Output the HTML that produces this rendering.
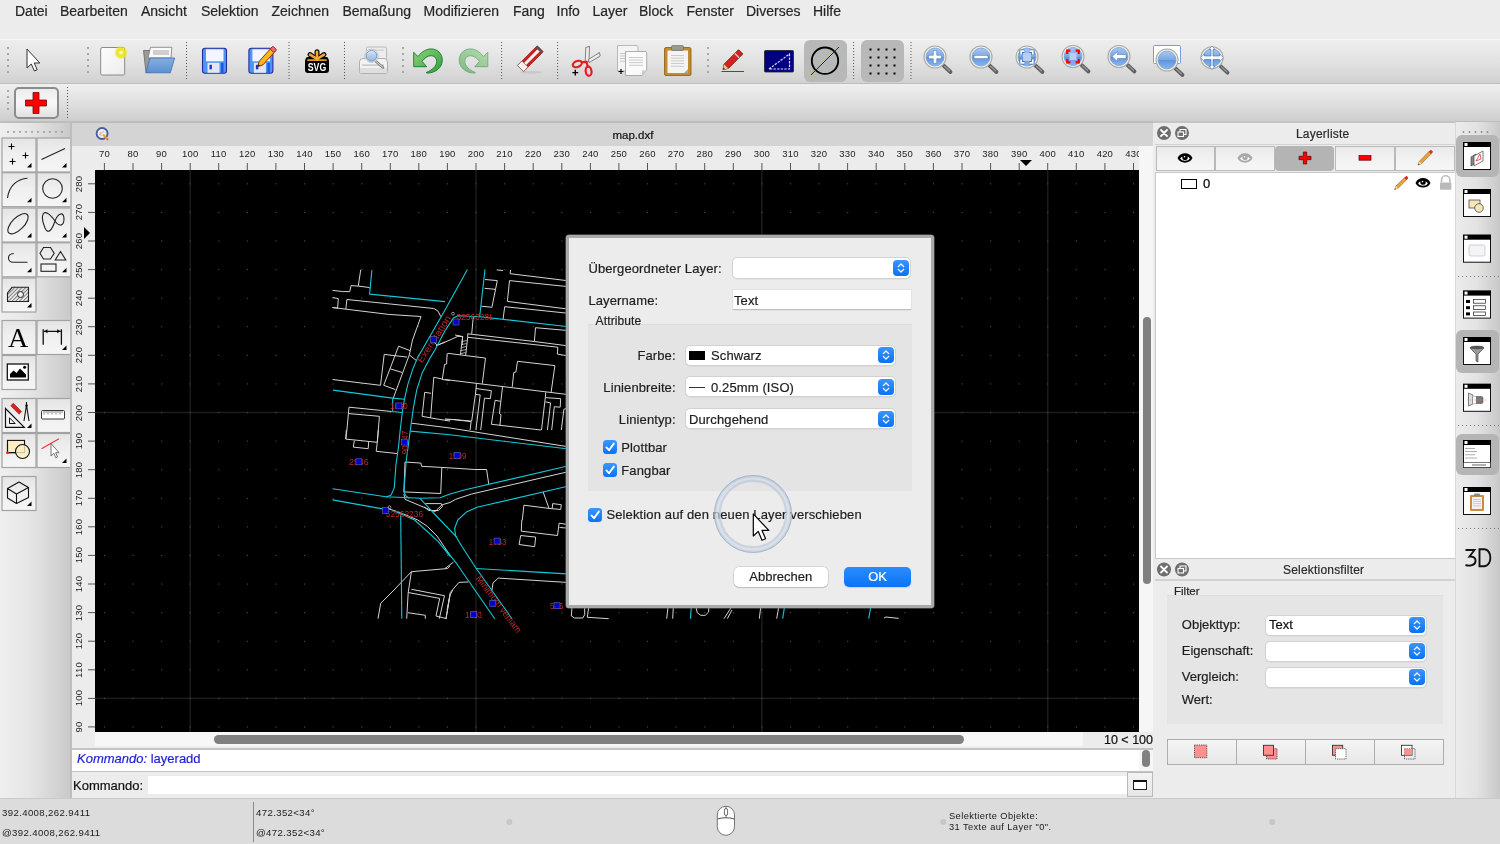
<!DOCTYPE html><html><head><meta charset="utf-8"><style>
*{box-sizing:border-box;margin:0;padding:0}
html,body{width:1500px;height:844px;overflow:hidden;background:#ececec;font-family:"Liberation Sans",sans-serif;color:#000}
body{position:relative}
.a{position:absolute}
.t{position:absolute;white-space:nowrap;line-height:1;-webkit-text-stroke:0.2px currentColor}
.mi{position:absolute;top:3px;font-size:14px;color:#262626;line-height:17px;white-space:nowrap;-webkit-text-stroke:0.2px currentColor}
.tbtn{position:absolute;width:34px;height:34px;border:1px solid #ababab;background:linear-gradient(#f7f7f7,#efefef 50%,#e2e2e2)}
.st{position:absolute;font-size:9.6px;letter-spacing:0.38px;color:#1a1a1a;white-space:nowrap;line-height:1}
.combo{position:absolute;background:#fff;border:1px solid #d2d2d2;border-radius:5px;box-shadow:0 0.5px 0.5px rgba(0,0,0,.08)}
.cbtn{position:absolute;background:linear-gradient(#3a95ff,#0a72f0);border-radius:4px}
.chk{position:absolute;width:14px;height:14px;border-radius:3.5px;background:linear-gradient(#3b97ff,#0b74f2)}
</style></head><body><div style="position:absolute;left:0;top:0;width:1500px;height:844px;will-change:transform">
<div class="mi" style="left:15px">Datei</div>
<div class="mi" style="left:60px">Bearbeiten</div>
<div class="mi" style="left:141px">Ansicht</div>
<div class="mi" style="left:201px">Selektion</div>
<div class="mi" style="left:271.5px">Zeichnen</div>
<div class="mi" style="left:342.5px">Bemaßung</div>
<div class="mi" style="left:423.5px">Modifizieren</div>
<div class="mi" style="left:513px">Fang</div>
<div class="mi" style="left:556.5px">Info</div>
<div class="mi" style="left:592.5px">Layer</div>
<div class="mi" style="left:639px">Block</div>
<div class="mi" style="left:686.5px">Fenster</div>
<div class="mi" style="left:746px">Diverses</div>
<div class="mi" style="left:813px">Hilfe</div>
<div class="a" style="left:0;top:39px;width:1500px;height:45px;background:linear-gradient(#eeeeee,#e2e2e2 50%,#d1d1d1);border-top:1px solid #f7f7f7;border-bottom:1px solid #bdbdbd"></div>
<div class="a" style="left:0;top:84px;width:1500px;height:39px;background:linear-gradient(#efefef,#e0e0e0 50%,#cecece);border-bottom:2px solid #bdbdbd"></div>
<svg class="a" style="left:0px;top:0px;overflow:visible" width="1" height="1" viewBox="0 0 1 1"><rect x="7.1" y="47.1" width="1.8" height="1.8" fill="#9a9a9a"/><rect x="7.1" y="53.1" width="1.8" height="1.8" fill="#9a9a9a"/><rect x="7.1" y="59.1" width="1.8" height="1.8" fill="#9a9a9a"/><rect x="7.1" y="65.1" width="1.8" height="1.8" fill="#9a9a9a"/><rect x="7.1" y="71.1" width="1.8" height="1.8" fill="#9a9a9a"/><rect x="87.1" y="47.1" width="1.8" height="1.8" fill="#9a9a9a"/><rect x="87.1" y="53.1" width="1.8" height="1.8" fill="#9a9a9a"/><rect x="87.1" y="59.1" width="1.8" height="1.8" fill="#9a9a9a"/><rect x="87.1" y="65.1" width="1.8" height="1.8" fill="#9a9a9a"/><rect x="87.1" y="71.1" width="1.8" height="1.8" fill="#9a9a9a"/><rect x="402.1" y="47.1" width="1.8" height="1.8" fill="#9a9a9a"/><rect x="402.1" y="53.1" width="1.8" height="1.8" fill="#9a9a9a"/><rect x="402.1" y="59.1" width="1.8" height="1.8" fill="#9a9a9a"/><rect x="402.1" y="65.1" width="1.8" height="1.8" fill="#9a9a9a"/><rect x="402.1" y="71.1" width="1.8" height="1.8" fill="#9a9a9a"/><rect x="707.1" y="47.1" width="1.8" height="1.8" fill="#9a9a9a"/><rect x="707.1" y="53.1" width="1.8" height="1.8" fill="#9a9a9a"/><rect x="707.1" y="59.1" width="1.8" height="1.8" fill="#9a9a9a"/><rect x="707.1" y="65.1" width="1.8" height="1.8" fill="#9a9a9a"/><rect x="707.1" y="71.1" width="1.8" height="1.8" fill="#9a9a9a"/><rect x="186.0" y="42.0" width="1" height="1" fill="#555"/><rect x="186.0" y="45.0" width="1" height="1" fill="#555"/><rect x="186.0" y="48.0" width="1" height="1" fill="#555"/><rect x="186.0" y="51.0" width="1" height="1" fill="#555"/><rect x="186.0" y="54.0" width="1" height="1" fill="#555"/><rect x="186.0" y="57.0" width="1" height="1" fill="#555"/><rect x="186.0" y="60.0" width="1" height="1" fill="#555"/><rect x="186.0" y="63.0" width="1" height="1" fill="#555"/><rect x="186.0" y="66.0" width="1" height="1" fill="#555"/><rect x="186.0" y="69.0" width="1" height="1" fill="#555"/><rect x="186.0" y="72.0" width="1" height="1" fill="#555"/><rect x="186.0" y="75.0" width="1" height="1" fill="#555"/><rect x="186.0" y="78.0" width="1" height="1" fill="#555"/><rect x="288.5" y="42.0" width="1" height="1" fill="#555"/><rect x="288.5" y="45.0" width="1" height="1" fill="#555"/><rect x="288.5" y="48.0" width="1" height="1" fill="#555"/><rect x="288.5" y="51.0" width="1" height="1" fill="#555"/><rect x="288.5" y="54.0" width="1" height="1" fill="#555"/><rect x="288.5" y="57.0" width="1" height="1" fill="#555"/><rect x="288.5" y="60.0" width="1" height="1" fill="#555"/><rect x="288.5" y="63.0" width="1" height="1" fill="#555"/><rect x="288.5" y="66.0" width="1" height="1" fill="#555"/><rect x="288.5" y="69.0" width="1" height="1" fill="#555"/><rect x="288.5" y="72.0" width="1" height="1" fill="#555"/><rect x="288.5" y="75.0" width="1" height="1" fill="#555"/><rect x="288.5" y="78.0" width="1" height="1" fill="#555"/><rect x="344.0" y="42.0" width="1" height="1" fill="#555"/><rect x="344.0" y="45.0" width="1" height="1" fill="#555"/><rect x="344.0" y="48.0" width="1" height="1" fill="#555"/><rect x="344.0" y="51.0" width="1" height="1" fill="#555"/><rect x="344.0" y="54.0" width="1" height="1" fill="#555"/><rect x="344.0" y="57.0" width="1" height="1" fill="#555"/><rect x="344.0" y="60.0" width="1" height="1" fill="#555"/><rect x="344.0" y="63.0" width="1" height="1" fill="#555"/><rect x="344.0" y="66.0" width="1" height="1" fill="#555"/><rect x="344.0" y="69.0" width="1" height="1" fill="#555"/><rect x="344.0" y="72.0" width="1" height="1" fill="#555"/><rect x="344.0" y="75.0" width="1" height="1" fill="#555"/><rect x="344.0" y="78.0" width="1" height="1" fill="#555"/><rect x="501.1" y="42.0" width="1" height="1" fill="#555"/><rect x="501.1" y="45.0" width="1" height="1" fill="#555"/><rect x="501.1" y="48.0" width="1" height="1" fill="#555"/><rect x="501.1" y="51.0" width="1" height="1" fill="#555"/><rect x="501.1" y="54.0" width="1" height="1" fill="#555"/><rect x="501.1" y="57.0" width="1" height="1" fill="#555"/><rect x="501.1" y="60.0" width="1" height="1" fill="#555"/><rect x="501.1" y="63.0" width="1" height="1" fill="#555"/><rect x="501.1" y="66.0" width="1" height="1" fill="#555"/><rect x="501.1" y="69.0" width="1" height="1" fill="#555"/><rect x="501.1" y="72.0" width="1" height="1" fill="#555"/><rect x="501.1" y="75.0" width="1" height="1" fill="#555"/><rect x="501.1" y="78.0" width="1" height="1" fill="#555"/><rect x="557.1" y="42.0" width="1" height="1" fill="#555"/><rect x="557.1" y="45.0" width="1" height="1" fill="#555"/><rect x="557.1" y="48.0" width="1" height="1" fill="#555"/><rect x="557.1" y="51.0" width="1" height="1" fill="#555"/><rect x="557.1" y="54.0" width="1" height="1" fill="#555"/><rect x="557.1" y="57.0" width="1" height="1" fill="#555"/><rect x="557.1" y="60.0" width="1" height="1" fill="#555"/><rect x="557.1" y="63.0" width="1" height="1" fill="#555"/><rect x="557.1" y="66.0" width="1" height="1" fill="#555"/><rect x="557.1" y="69.0" width="1" height="1" fill="#555"/><rect x="557.1" y="72.0" width="1" height="1" fill="#555"/><rect x="557.1" y="75.0" width="1" height="1" fill="#555"/><rect x="557.1" y="78.0" width="1" height="1" fill="#555"/><rect x="853.1" y="42.0" width="1" height="1" fill="#555"/><rect x="853.1" y="45.0" width="1" height="1" fill="#555"/><rect x="853.1" y="48.0" width="1" height="1" fill="#555"/><rect x="853.1" y="51.0" width="1" height="1" fill="#555"/><rect x="853.1" y="54.0" width="1" height="1" fill="#555"/><rect x="853.1" y="57.0" width="1" height="1" fill="#555"/><rect x="853.1" y="60.0" width="1" height="1" fill="#555"/><rect x="853.1" y="63.0" width="1" height="1" fill="#555"/><rect x="853.1" y="66.0" width="1" height="1" fill="#555"/><rect x="853.1" y="69.0" width="1" height="1" fill="#555"/><rect x="853.1" y="72.0" width="1" height="1" fill="#555"/><rect x="853.1" y="75.0" width="1" height="1" fill="#555"/><rect x="853.1" y="78.0" width="1" height="1" fill="#555"/><rect x="910.5" y="42.0" width="1" height="1" fill="#555"/><rect x="910.5" y="45.0" width="1" height="1" fill="#555"/><rect x="910.5" y="48.0" width="1" height="1" fill="#555"/><rect x="910.5" y="51.0" width="1" height="1" fill="#555"/><rect x="910.5" y="54.0" width="1" height="1" fill="#555"/><rect x="910.5" y="57.0" width="1" height="1" fill="#555"/><rect x="910.5" y="60.0" width="1" height="1" fill="#555"/><rect x="910.5" y="63.0" width="1" height="1" fill="#555"/><rect x="910.5" y="66.0" width="1" height="1" fill="#555"/><rect x="910.5" y="69.0" width="1" height="1" fill="#555"/><rect x="910.5" y="72.0" width="1" height="1" fill="#555"/><rect x="910.5" y="75.0" width="1" height="1" fill="#555"/><rect x="910.5" y="78.0" width="1" height="1" fill="#555"/></svg>
<div class="a" style="left:804px;top:40px;width:43px;height:42px;background:#b8b8b8;border-radius:6px"></div>
<div class="a" style="left:861px;top:40px;width:43px;height:42px;background:#b8b8b8;border-radius:6px"></div>
<svg class="a" style="left:0px;top:0px;overflow:visible" width="1" height="1" viewBox="0 0 1 1"><path d="M27 49 L27 68 L31.3 64 L34.4 71 L37.2 69.8 L34.2 63 L39.8 63 Z" fill="#fff" stroke="#333" stroke-width="1"/><defs><radialGradient id="glow"><stop offset="0" stop-color="#fffef0"/><stop offset="0.2" stop-color="#f6f08a"/><stop offset="0.45" stop-color="#eee41a"/><stop offset="0.7" stop-color="#eee41a" stop-opacity="0.8"/><stop offset="1" stop-color="#f2ea20" stop-opacity="0"/></radialGradient><linearGradient id="paper" x1="0" y1="0" x2="1" y2="1"><stop offset="0" stop-color="#fdfdfd"/><stop offset="1" stop-color="#ececec"/></linearGradient><linearGradient id="fold" x1="0" y1="0" x2="0" y2="1"><stop offset="0" stop-color="#86b0e0"/><stop offset="1" stop-color="#5b8fd0"/></linearGradient><linearGradient id="lens" x1="0" y1="0" x2="0" y2="1"><stop offset="0" stop-color="#a8c8f0"/><stop offset="0.5" stop-color="#7aa6e0"/><stop offset="0.52" stop-color="#5f93da"/><stop offset="1" stop-color="#8ab6ee"/></linearGradient><linearGradient id="lensl" x1="0" y1="0" x2="0" y2="1"><stop offset="0" stop-color="#dfe9f7"/><stop offset="0.5" stop-color="#b6cbe8"/><stop offset="1" stop-color="#9ab8e2"/></linearGradient><linearGradient id="grn" x1="0" y1="0" x2="1" y2="1"><stop offset="0" stop-color="#8fd47a"/><stop offset="1" stop-color="#2e9e3e"/></linearGradient></defs><rect x="100.7" y="47.5" width="24" height="27.5" rx="1.5" fill="url(#paper)" stroke="#8a8a8a" stroke-width="1"/><circle cx="121" cy="52.6" r="7" fill="url(#glow)"/><path d="M143.5 50.5 L150 50.5 L150 72.5 L146 72.5 Z" fill="#9a9a9a" stroke="#666" stroke-width="0.8"/><path d="M150.5 47.3 L171.8 47.3 L171 58 L148 58 Z" fill="#fafafa" stroke="#777" stroke-width="0.8"/><rect x="153" y="50" width="16" height="5" fill="#cfcfcf"/><path d="M150 58 L174.6 58 L170.3 72.8 L145.8 72.8 Z" fill="url(#fold)" stroke="#3c6cb0" stroke-width="0.8"/><rect x="202.5" y="48.3" width="24" height="25" rx="2.5" fill="#4d95f5" stroke="#2a2aa0" stroke-width="1.1"/><rect x="206" y="49.3" width="17.5" height="12" fill="#f4f6ff"/><rect x="207.5" y="62.8" width="12" height="10" fill="#e6e6ee"/><rect x="209.5" y="64.8" width="2.4" height="4.5" fill="#1636d8"/><rect x="221" y="62.8" width="2.5" height="10" fill="#1d5ae0"/><rect x="248.9" y="48.3" width="24" height="25" rx="2.5" fill="#4d95f5" stroke="#2a2aa0" stroke-width="1.1"/><rect x="252.4" y="49.3" width="17.5" height="12" fill="#f4f6ff"/><rect x="253.9" y="62.8" width="12" height="10" fill="#e6e6ee"/><rect x="255.9" y="64.8" width="2.4" height="4.5" fill="#1636d8"/><rect x="267.4" y="62.8" width="2.5" height="10" fill="#1d5ae0"/><g transform="translate(258 66.5) rotate(-48)"><path d="M0 0 L4.5 -2.6 L24 -2.6 L24 2.6 L4.5 2.6Z" fill="#f8b818" stroke="#a02010" stroke-width="0.9"/><rect x="21" y="-2.6" width="4" height="5.2" rx="1" fill="#e87070" stroke="#a02010" stroke-width="0.8"/><path d="M0 0 L2 -1 L2 1Z" fill="#222"/></g><rect x="305" y="58.5" width="24" height="14.5" rx="3" fill="#000"/><g stroke="#000" stroke-width="5" stroke-linecap="round"><line x1="317" y1="60" x2="317" y2="51.8"/><line x1="317" y1="60" x2="310" y2="54.6"/><line x1="317" y1="60" x2="324" y2="54.6"/><line x1="317" y1="60" x2="308" y2="59.5"/><line x1="317" y1="60" x2="326" y2="59.5"/></g><g stroke="#f6a92e" stroke-width="2.6" stroke-linecap="round"><line x1="317" y1="59" x2="317" y2="51.8"/><line x1="317" y1="59" x2="310" y2="54.6"/><line x1="317" y1="59" x2="324" y2="54.6"/></g><rect x="307.3" y="59.3" width="19.4" height="1.6" fill="#f6a92e"/><text x="317" y="71" text-anchor="middle" font-family="Liberation Sans" font-weight="bold" font-size="11.5" fill="#fff" textLength="18.5" lengthAdjust="spacingAndGlyphs">SVG</text><rect x="366.5" y="47" width="20" height="13" rx="1.2" fill="#ececec" stroke="#b4b4b4" stroke-width="0.9"/><rect x="369" y="49.5" width="15" height="1.5" fill="#d4d4d4"/><path d="M359.5 62 Q359.5 58.5 363 58.5 L384 58.5 Q387.5 58.5 387.5 62 L387.5 71.5 Q387.5 73.5 385.5 73.5 L361.5 73.5 Q359.5 73.5 359.5 71.5Z" fill="#f2f2f2" stroke="#a8a8a8" stroke-width="0.9"/><rect x="360" y="68" width="27" height="5" fill="#dedede"/><rect x="362" y="64.5" width="22" height="1.2" fill="#bbb"/><line x1="375.5" y1="61" x2="383" y2="67.5" stroke="#8a8a8a" stroke-width="2.6" stroke-linecap="round"/><line x1="376" y1="61.5" x2="382.5" y2="67" stroke="#d8d8d8" stroke-width="0.9" stroke-linecap="round"/><circle cx="371.5" cy="55.8" r="6.6" fill="#fff" stroke="#bcbcbc" stroke-width="0.9"/><circle cx="371.5" cy="55.8" r="5.4" fill="url(#lensl)" stroke="#4f86cc" stroke-width="0.8"/><g transform="translate(413.5 48.7)"><path d="M0.2 3.6 L4.4 7.8 C9 2.2 13.5 0.2 17.8 0.2 C24 0.2 28.8 5 28.8 11.5 C28.8 18.5 22.5 24 14.2 24.4 L12.6 23.9 C18.5 21.5 23.2 17.5 23.2 12.8 C23.2 9.2 20.8 7 17.5 7 C14 7 11 9.5 8.5 12.6 L13.2 18 L0.2 18 Z" fill="url(#grn)" stroke="#16782a" stroke-width="0.9"/></g><g transform="translate(488 48.7) scale(-1 1)" opacity="0.55"><path d="M0.2 3.6 L4.4 7.8 C9 2.2 13.5 0.2 17.8 0.2 C24 0.2 28.8 5 28.8 11.5 C28.8 18.5 22.5 24 14.2 24.4 L12.6 23.9 C18.5 21.5 23.2 17.5 23.2 12.8 C23.2 9.2 20.8 7 17.5 7 C14 7 11 9.5 8.5 12.6 L13.2 18 L0.2 18 Z" fill="url(#grn)" stroke="#16782a" stroke-width="0.9"/></g><ellipse cx="531" cy="72.3" rx="11" ry="1.4" fill="#c8c8c8"/><g transform="translate(520.5 68.5) rotate(-45)"><rect x="0" y="-4.3" width="28" height="8.6" rx="1" fill="#d21c1c" stroke="#8a1414" stroke-width="0.6"/><rect x="6" y="-1.5" width="20" height="3" fill="#f4f4f4"/><rect x="25.5" y="-4.3" width="2.5" height="8.6" fill="#555"/><rect x="0" y="-4.3" width="6.3" height="8.6" fill="#f2f2f2" stroke="#7a4a4a" stroke-width="0.6"/></g><path d="M585.2 62 L585.8 47.5 L589.5 46.3 L589 61Z" fill="#ececec" stroke="#555" stroke-width="0.7"/><path d="M588.5 59.5 L599.5 52.5 L600.2 56 L589.2 62.5Z" fill="#eeeeee" stroke="#555" stroke-width="0.7"/><ellipse cx="577.3" cy="64" rx="4.7" ry="2.9" transform="rotate(-22 577.3 64)" fill="none" stroke="#e01e1e" stroke-width="2.2"/><ellipse cx="588.6" cy="71.2" rx="2.9" ry="4.6" transform="rotate(-8 588.6 71.2)" fill="none" stroke="#e01e1e" stroke-width="2.2"/><path d="M581.5 62.2 L586.5 61.8 L587.8 66.8" fill="none" stroke="#e01e1e" stroke-width="2.2"/><path d="M572.4 72.6 H578.2 M575.3 69.7 V75.5" stroke="#000" stroke-width="1.4"/><path d="M617.5 45.5 H637 L638 47 V71 H617.5Z" fill="#f4f4f4" stroke="#aaa" stroke-width="0.8"/><rect x="620" y="53.0" width="10" height="0.8" fill="#bbb"/><rect x="620" y="55.6" width="10" height="0.8" fill="#bbb"/><rect x="620" y="58.2" width="10" height="0.8" fill="#bbb"/><rect x="620" y="60.8" width="10" height="0.8" fill="#bbb"/><path d="M625.5 51.5 H646 L646.7 53 V70 L642 75.5 H625.5Z" fill="#fafafa" stroke="#999" stroke-width="0.8"/><path d="M642 75.5 L642 70.5 L646.7 70.5Z" fill="#ccc"/><rect x="629" y="57.0" width="14" height="0.9" fill="#c4c4c4"/><rect x="629" y="59.6" width="14" height="0.9" fill="#c4c4c4"/><rect x="629" y="62.2" width="14" height="0.9" fill="#c4c4c4"/><rect x="629" y="64.8" width="14" height="0.9" fill="#c4c4c4"/><path d="M618.5 71.5 H623.5 M621 69 V74" stroke="#000" stroke-width="1.2"/><rect x="664.5" y="47.5" width="26.5" height="28" rx="1.5" fill="#c48a30" stroke="#8a5a14" stroke-width="0.8"/><rect x="667.5" y="50.5" width="20.5" height="22.5" fill="#f4f4f4"/><path d="M684 73 L688 69 L688 73Z" fill="#aaa"/><rect x="671.5" y="45.5" width="12" height="5" rx="1.2" fill="#9a9a8a" stroke="#666" stroke-width="0.6"/><rect x="671" y="55.0" width="13" height="0.9" fill="#c8c8c8"/><rect x="671" y="57.7" width="13" height="0.9" fill="#c8c8c8"/><rect x="671" y="60.4" width="13" height="0.9" fill="#c8c8c8"/><rect x="671" y="63.1" width="13" height="0.9" fill="#c8c8c8"/><rect x="671" y="65.8" width="13" height="0.9" fill="#c8c8c8"/><line x1="721.5" y1="71.5" x2="744" y2="71.5" stroke="#f00" stroke-width="1"/><g transform="translate(723 69.5) rotate(-45)"><path d="M0 0 L4.5 -3 L25 -3 L25 3 L4.5 3Z" fill="#d82020" stroke="#6a2a10" stroke-width="0.9"/><path d="M0 0 L4.5 -3 L4.5 3Z" fill="#e9c49a"/><path d="M0 0 L1.7 -1.1 L1.7 1.1Z" fill="#222"/><rect x="19" y="-3" width="1.5" height="6" fill="#ccc"/></g><rect x="764.5" y="50.5" width="29" height="21.5" rx="1" fill="#000080" stroke="#222" stroke-width="0.8"/><path d="M769 69 L789.5 54 L789.5 69 Z" fill="none" stroke="#dde" stroke-width="1.2" stroke-dasharray="2.4 1.2"/><circle cx="825" cy="60.7" r="13.2" fill="none" stroke="#000" stroke-width="1.8"/><line x1="811" y1="75" x2="839" y2="47" stroke="#1010f0" stroke-width="1"/><rect x="869.5" y="48.5" width="2" height="2" fill="#000"/><rect x="869.5" y="56.5" width="2" height="2" fill="#000"/><rect x="869.5" y="64.5" width="2" height="2" fill="#000"/><rect x="869.5" y="72.5" width="2" height="2" fill="#000"/><rect x="877.5" y="48.5" width="2" height="2" fill="#000"/><rect x="877.5" y="56.5" width="2" height="2" fill="#000"/><rect x="877.5" y="64.5" width="2" height="2" fill="#000"/><rect x="877.5" y="72.5" width="2" height="2" fill="#000"/><rect x="885.5" y="48.5" width="2" height="2" fill="#000"/><rect x="885.5" y="56.5" width="2" height="2" fill="#000"/><rect x="885.5" y="64.5" width="2" height="2" fill="#000"/><rect x="885.5" y="72.5" width="2" height="2" fill="#000"/><rect x="893.5" y="48.5" width="2" height="2" fill="#000"/><rect x="893.5" y="56.5" width="2" height="2" fill="#000"/><rect x="893.5" y="64.5" width="2" height="2" fill="#000"/><rect x="893.5" y="72.5" width="2" height="2" fill="#000"/><line x1="943.5" y1="65.5" x2="950.5" y2="72" stroke="#606060" stroke-width="3.8" stroke-linecap="round"/><line x1="944.5" y1="66.2" x2="949.5" y2="70.8" stroke="#9a9a9a" stroke-width="1.2" stroke-linecap="round"/><circle cx="935" cy="57" r="11" fill="#f2f2ec" stroke="#a9a9a2" stroke-width="1.1"/><circle cx="935" cy="57" r="9" fill="url(#lens)" stroke="#6f9ad8" stroke-width="0.7"/><path d="M933.3 50.5 H936.7 V55.3 H941.5 V58.7 H936.7 V63.5 H933.3 V58.7 H928.5 V55.3 H933.3Z" fill="#fff" stroke="#3a6ab0" stroke-width="0.5"/><line x1="989.5" y1="65.5" x2="996.5" y2="72" stroke="#606060" stroke-width="3.8" stroke-linecap="round"/><line x1="990.5" y1="66.2" x2="995.5" y2="70.8" stroke="#9a9a9a" stroke-width="1.2" stroke-linecap="round"/><circle cx="981" cy="57" r="11" fill="#f2f2ec" stroke="#a9a9a2" stroke-width="1.1"/><circle cx="981" cy="57" r="9" fill="url(#lens)" stroke="#6f9ad8" stroke-width="0.7"/><rect x="974" y="55.3" width="14" height="3.4" fill="#fff" stroke="#3a6ab0" stroke-width="0.5"/><line x1="1035.5" y1="65.5" x2="1042.5" y2="72" stroke="#606060" stroke-width="3.8" stroke-linecap="round"/><line x1="1036.5" y1="66.2" x2="1041.5" y2="70.8" stroke="#9a9a9a" stroke-width="1.2" stroke-linecap="round"/><circle cx="1027" cy="57" r="11" fill="#f2f2ec" stroke="#a9a9a2" stroke-width="1.1"/><circle cx="1027" cy="57" r="9" fill="url(#lens)" stroke="#6f9ad8" stroke-width="0.7"/><rect x="1023" y="53" width="8" height="8" fill="#b8d0f0"/><path d="M1021.2 54.400000000000006 V51.2 H1024.4 M1029.6 51.2 H1032.8 V54.400000000000006 M1032.8 59.599999999999994 V62.8 H1029.6 M1024.4 62.8 H1021.2 V59.599999999999994" fill="none" stroke="#3a6ab0" stroke-width="3.4"/><path d="M1021.2 54.400000000000006 V51.2 H1024.4 M1029.6 51.2 H1032.8 V54.400000000000006 M1032.8 59.599999999999994 V62.8 H1029.6 M1024.4 62.8 H1021.2 V59.599999999999994" fill="none" stroke="#fff" stroke-width="1.8"/><line x1="1081.5" y1="65.0" x2="1088.5" y2="71.5" stroke="#606060" stroke-width="3.8" stroke-linecap="round"/><line x1="1082.5" y1="65.7" x2="1087.5" y2="70.3" stroke="#9a9a9a" stroke-width="1.2" stroke-linecap="round"/><circle cx="1073" cy="56.5" r="11" fill="#f2f2ec" stroke="#a9a9a2" stroke-width="1.1"/><circle cx="1073" cy="56.5" r="9" fill="url(#lens)" stroke="#6f9ad8" stroke-width="0.7"/><rect x="1069.5" y="53" width="7" height="7" fill="#b8d0f0"/><path d="M1067.2 53.900000000000006 V50.7 H1070.4 M1075.6 50.7 H1078.8 V53.900000000000006 M1078.8 59.099999999999994 V62.3 H1075.6 M1070.4 62.3 H1067.2 V59.099999999999994" fill="none" stroke="#f00" stroke-width="2.2"/><line x1="1127.5" y1="65.0" x2="1134.5" y2="71.5" stroke="#606060" stroke-width="3.8" stroke-linecap="round"/><line x1="1128.5" y1="65.7" x2="1133.5" y2="70.3" stroke="#9a9a9a" stroke-width="1.2" stroke-linecap="round"/><circle cx="1119" cy="56.5" r="11" fill="#f2f2ec" stroke="#a9a9a2" stroke-width="1.1"/><circle cx="1119" cy="56.5" r="9" fill="url(#lens)" stroke="#6f9ad8" stroke-width="0.7"/><path d="M1112 56.5 L1117.5 51.5 L1117.5 54.5 L1126 54.5 L1126 58.5 L1117.5 58.5 L1117.5 61.5Z" fill="#fff" stroke="#3a6ab0" stroke-width="0.5"/><rect x="1153.5" y="45.5" width="27" height="18" rx="1" fill="#fff" stroke="#7a9cd6" stroke-width="1"/><line x1="1175.5" y1="68.5" x2="1182.5" y2="75" stroke="#606060" stroke-width="3.8" stroke-linecap="round"/><line x1="1176.5" y1="69.2" x2="1181.5" y2="73.8" stroke="#9a9a9a" stroke-width="1.2" stroke-linecap="round"/><circle cx="1167" cy="60" r="11" fill="#f2f2ec" stroke="#a9a9a2" stroke-width="1.1"/><circle cx="1167" cy="60" r="9" fill="url(#lens)" stroke="#6f9ad8" stroke-width="0.7"/><line x1="1220.5" y1="66.2" x2="1227.5" y2="72.7" stroke="#606060" stroke-width="3.8" stroke-linecap="round"/><line x1="1221.5" y1="66.9" x2="1226.5" y2="71.5" stroke="#9a9a9a" stroke-width="1.2" stroke-linecap="round"/><circle cx="1212" cy="57.7" r="11" fill="#f2f2ec" stroke="#a9a9a2" stroke-width="1.1"/><circle cx="1212" cy="57.7" r="9" fill="url(#lens)" stroke="#6f9ad8" stroke-width="0.7"/><path d="M1212 46 L1215 49.5 H1213 V56 H1219.5 V54 L1223.5 57.7 L1219.5 61.4 V59.4 H1213 V66 H1215 L1212 69.5 L1209 66 H1211 V59.4 H1204.5 V61.4 L1200.5 57.7 L1204.5 54 V56 H1211 V49.5 H1209Z" fill="#fff" stroke="#3a6ab0" stroke-width="0.6"/></svg>
<svg class="a" style="left:0px;top:0px;overflow:visible" width="1" height="1" viewBox="0 0 1 1"><rect x="7.1" y="90.1" width="1.8" height="1.8" fill="#9a9a9a"/><rect x="7.1" y="96.1" width="1.8" height="1.8" fill="#9a9a9a"/><rect x="7.1" y="102.1" width="1.8" height="1.8" fill="#9a9a9a"/><rect x="7.1" y="108.1" width="1.8" height="1.8" fill="#9a9a9a"/><rect x="67.0" y="87.0" width="1" height="1" fill="#555"/><rect x="67.0" y="90.0" width="1" height="1" fill="#555"/><rect x="67.0" y="93.0" width="1" height="1" fill="#555"/><rect x="67.0" y="96.0" width="1" height="1" fill="#555"/><rect x="67.0" y="99.0" width="1" height="1" fill="#555"/><rect x="67.0" y="102.0" width="1" height="1" fill="#555"/><rect x="67.0" y="105.0" width="1" height="1" fill="#555"/><rect x="67.0" y="108.0" width="1" height="1" fill="#555"/><rect x="67.0" y="111.0" width="1" height="1" fill="#555"/><rect x="67.0" y="114.0" width="1" height="1" fill="#555"/><rect x="67.0" y="117.0" width="1" height="1" fill="#555"/></svg>
<div class="a" style="left:14.3px;top:87.3px;width:44.5px;height:32px;border:2px solid #8c8c8c;border-radius:5px;background:linear-gradient(#ececec,#f8f8f8 50%,#e0e0e0)"></div>
<svg class="a" style="left:0px;top:0px;overflow:visible" width="1" height="1" viewBox="0 0 1 1"><path d="M33.0 92.5 H39.0 V100.0 H46.5 V106.0 H39.0 V113.5 H33.0 V106.0 H25.5 V100.0 H33.0Z" fill="#f00" stroke="#5a0000" stroke-width="0.7"/></svg>
<div class="a" style="left:0;top:123px;width:71px;height:675px;background:linear-gradient(90deg,#efefef,#e6e6e6 40%,#c9c9c9)"></div>
<svg class="a" style="left:0px;top:0px;overflow:visible" width="1" height="1" viewBox="0 0 1 1"><rect x="7.1" y="131" width="1.8" height="1.8" fill="#a0a0a0"/><rect x="13.1" y="131" width="1.8" height="1.8" fill="#a0a0a0"/><rect x="19.1" y="131" width="1.8" height="1.8" fill="#a0a0a0"/><rect x="25.1" y="131" width="1.8" height="1.8" fill="#a0a0a0"/><rect x="31.1" y="131" width="1.8" height="1.8" fill="#a0a0a0"/><rect x="37.1" y="131" width="1.8" height="1.8" fill="#a0a0a0"/><rect x="43.1" y="131" width="1.8" height="1.8" fill="#a0a0a0"/><rect x="49.1" y="131" width="1.8" height="1.8" fill="#a0a0a0"/><rect x="55.1" y="131" width="1.8" height="1.8" fill="#a0a0a0"/><rect x="61.1" y="131" width="1.8" height="1.8" fill="#a0a0a0"/><defs><linearGradient id="tbg" x1="0" y1="0" x2="0" y2="1"><stop offset="0" stop-color="#e4e4e4"/><stop offset="0.45" stop-color="#efefef"/><stop offset="1" stop-color="#f5f5f5"/></linearGradient></defs><rect x="2.0" y="138.0" width="34" height="34" fill="url(#tbg)" stroke="#a2a2a2" stroke-width="1.2"/><path d="M31.5 163.0 L31.5 167.5 L27.0 167.5Z" fill="#000"/><rect x="37.0" y="138.0" width="34" height="34" fill="url(#tbg)" stroke="#a2a2a2" stroke-width="1.2"/><path d="M66.5 163.0 L66.5 167.5 L62.0 167.5Z" fill="#000"/><rect x="2.0" y="172.7" width="34" height="34" fill="url(#tbg)" stroke="#a2a2a2" stroke-width="1.2"/><path d="M31.5 197.7 L31.5 202.2 L27.0 202.2Z" fill="#000"/><rect x="37.0" y="172.7" width="34" height="34" fill="url(#tbg)" stroke="#a2a2a2" stroke-width="1.2"/><path d="M66.5 197.7 L66.5 202.2 L62.0 202.2Z" fill="#000"/><rect x="2.0" y="208.0" width="34" height="34" fill="url(#tbg)" stroke="#a2a2a2" stroke-width="1.2"/><path d="M31.5 233.0 L31.5 237.5 L27.0 237.5Z" fill="#000"/><rect x="37.0" y="208.0" width="34" height="34" fill="url(#tbg)" stroke="#a2a2a2" stroke-width="1.2"/><path d="M66.5 233.0 L66.5 237.5 L62.0 237.5Z" fill="#000"/><rect x="2.0" y="242.8" width="34" height="34" fill="url(#tbg)" stroke="#a2a2a2" stroke-width="1.2"/><path d="M31.5 267.8 L31.5 272.3 L27.0 272.3Z" fill="#000"/><rect x="37.0" y="242.8" width="34" height="34" fill="url(#tbg)" stroke="#a2a2a2" stroke-width="1.2"/><path d="M66.5 267.8 L66.5 272.3 L62.0 272.3Z" fill="#000"/><rect x="2.0" y="278.0" width="34" height="34" fill="url(#tbg)" stroke="#a2a2a2" stroke-width="1.2"/><path d="M31.5 303.0 L31.5 307.5 L27.0 307.5Z" fill="#000"/><rect x="2.0" y="320.5" width="34" height="34" fill="url(#tbg)" stroke="#a2a2a2" stroke-width="1.2"/><rect x="37.0" y="320.5" width="34" height="34" fill="url(#tbg)" stroke="#a2a2a2" stroke-width="1.2"/><path d="M66.5 345.5 L66.5 350 L62.0 350Z" fill="#000"/><rect x="2.0" y="355.5" width="34" height="34" fill="url(#tbg)" stroke="#a2a2a2" stroke-width="1.2"/><rect x="2.0" y="398.5" width="34" height="34" fill="url(#tbg)" stroke="#a2a2a2" stroke-width="1.2"/><path d="M31.5 423.5 L31.5 428 L27.0 428Z" fill="#000"/><rect x="37.0" y="398.5" width="34" height="34" fill="url(#tbg)" stroke="#a2a2a2" stroke-width="1.2"/><rect x="2.0" y="433.5" width="34" height="34" fill="url(#tbg)" stroke="#a2a2a2" stroke-width="1.2"/><rect x="37.0" y="433.5" width="34" height="34" fill="url(#tbg)" stroke="#a2a2a2" stroke-width="1.2"/><path d="M66.5 458.5 L66.5 463 L62.0 463Z" fill="#000"/><rect x="2.0" y="476.5" width="34" height="34" fill="url(#tbg)" stroke="#a2a2a2" stroke-width="1.2"/><path d="M31.5 501.5 L31.5 506 L27.0 506Z" fill="#000"/><path d="M8.5 146.5 H14.5 M11.5 143.5 V149.5" stroke="#000" stroke-width="1.1"/><path d="M22.5 155.5 H28.5 M25.5 152.5 V158.5" stroke="#000" stroke-width="1.1"/><path d="M9.5 161.5 H15.5 M12.5 158.5 V164.5" stroke="#000" stroke-width="1.1"/><line x1="41.5" y1="159.5" x2="65" y2="148.5" stroke="#222" stroke-width="1.1"/><path d="M7.5 198 C9 186 17 179 27.5 178.3" fill="none" stroke="#222" stroke-width="1.1"/><circle cx="52.5" cy="188.5" r="9.8" fill="none" stroke="#222" stroke-width="1.1"/><ellipse cx="18" cy="223.7" rx="13" ry="6" transform="rotate(-45 18 223.7)" fill="none" stroke="#222" stroke-width="1.1"/><path d="M42.5 216 C44 209 50 214 55 221 C60 228 64 225 64 219 C64 211 58 213 55 221 C52 230 48 235 45 228 C43 223 42 219 42.5 216Z" fill="none" stroke="#222" stroke-width="1.1"/><path d="M13.8 253.5 C10 253.5 8.5 256 8.5 258 C8.5 260.5 10.5 262.3 13 262.3 L27.5 262.3" fill="none" stroke="#222" stroke-width="1.1"/><path d="M43.5 247.5 H50.5 L54.2 253.3 L50.5 259 H43.5 L40 253.3Z" fill="none" stroke="#222" stroke-width="1.1"/><path d="M60.5 251.5 L65.8 260 H55.2Z" fill="none" stroke="#222" stroke-width="1.1"/><rect x="41" y="264" width="15" height="7.3" fill="none" stroke="#222" stroke-width="1.1"/><defs><pattern id="hp" width="2.6" height="2.6" patternUnits="userSpaceOnUse" patternTransform="rotate(45)"><rect width="1" height="2.6" fill="#777"/></pattern></defs><path d="M12 287.3 H28.5 V301.5 H7.5 V293Z" fill="url(#hp)" stroke="#222" stroke-width="1.1"/><circle cx="20.5" cy="294.5" r="3" fill="#eee" stroke="#222" stroke-width="1"/><text x="18" y="346.7" text-anchor="middle" font-family="Liberation Serif" font-size="28" fill="#000">A</text><path d="M43.2 329.2 V344.8 M61.4 329.2 V344.8 M44 331.3 H60.6" stroke="#111" stroke-width="1.3"/><path d="M44 331.3 L47.5 329.3 V333.3Z M60.6 331.3 L57.1 329.3 V333.3Z" fill="#111"/><rect x="7.3" y="364" width="21" height="16" fill="#fff" stroke="#111" stroke-width="1.3"/><path d="M10 377.5 L10 374 L13.5 370.5 L16.5 373 L20 368.5 L26 374.5 V377.5Z" fill="#000"/><circle cx="24.6" cy="367.3" r="1.5" fill="#000"/><path d="M5.5 408.5 V427.3 H24.3Z" fill="none" stroke="#111" stroke-width="1.2"/><path d="M9.5 417.8 V423.5 H15.2Z" fill="none" stroke="#111" stroke-width="1"/><g transform="translate(20.5 413) rotate(-135)"><rect x="0" y="-1.8" width="12" height="3.6" fill="#e02020" stroke="#7a1010" stroke-width="0.5"/><path d="M0 -1.8 L-3 0 L0 1.8Z" fill="#eec"/></g><path d="M26.5 402 V405 M26.5 405 L24 421 M26.5 405 L29 421" fill="none" stroke="#111" stroke-width="1.1"/><circle cx="26.5" cy="405.5" r="1.2" fill="#111"/><rect x="41.5" y="410.5" width="23" height="8.5" rx="1" fill="#fff" stroke="#222" stroke-width="0.9"/><line x1="44" y1="410.5" x2="44" y2="414.5" stroke="#333" stroke-width="0.6"/><line x1="46" y1="410.5" x2="46" y2="413" stroke="#333" stroke-width="0.6"/><line x1="48" y1="410.5" x2="48" y2="414.5" stroke="#333" stroke-width="0.6"/><line x1="50" y1="410.5" x2="50" y2="413" stroke="#333" stroke-width="0.6"/><line x1="52" y1="410.5" x2="52" y2="414.5" stroke="#333" stroke-width="0.6"/><line x1="54" y1="410.5" x2="54" y2="413" stroke="#333" stroke-width="0.6"/><line x1="56" y1="410.5" x2="56" y2="414.5" stroke="#333" stroke-width="0.6"/><line x1="58" y1="410.5" x2="58" y2="413" stroke="#333" stroke-width="0.6"/><line x1="60" y1="410.5" x2="60" y2="414.5" stroke="#333" stroke-width="0.6"/><line x1="62" y1="410.5" x2="62" y2="413" stroke="#333" stroke-width="0.6"/><rect x="7.5" y="440.4" width="17" height="12.2" fill="#fbefc0" stroke="#111" stroke-width="1.1"/><circle cx="22.5" cy="451.5" r="7" fill="#fbefc0" fill-opacity="0.8" stroke="#111" stroke-width="1.1"/><path d="M7.5 444 V452.6 H16" fill="none" stroke="#111" stroke-width="1.1"/><circle cx="7.5" cy="452.8" r="1.4" fill="#f02020"/><line x1="41.5" y1="448.8" x2="59" y2="438.8" stroke="#f03030" stroke-width="1.1"/><path d="M51 443.5 V456 L53.8 453.3 L55.8 457.8 L57.5 457 L55.6 452.6 L59 452.6Z" fill="#fff" stroke="#555" stroke-width="0.8"/><path d="M7.5 488.5 L19 482 L28.5 487.5 L28.5 497.5 L16.5 503.5 L7.5 498Z M7.5 488.5 L16.5 494 L28.5 487.5 M16.5 494 V503.5" fill="none" stroke="#111" stroke-width="1.1" stroke-linejoin="round"/></svg>
<div class="a" style="left:70px;top:123px;width:2px;height:675px;background:#bdbdbd"></div>
<div class="a" style="left:72px;top:123px;width:1081px;height:23.5px;background:#d4d4d4"></div>
<div class="t" style="left:612.5px;top:130px;font-size:11.5px;color:#111">map.dxf</div>
<div class="a" style="left:72px;top:146px;width:1081px;height:24px;background:#ececec"></div>
<div class="a" style="left:72px;top:170px;width:23px;height:562px;background:#ececec"></div>
<div class="a" style="left:95px;top:170px;width:1044px;height:562px;background:#000"></div>
<div class="a" style="left:1139px;top:146px;width:14px;height:600px;background:#f6f6f6"></div>
<div class="a" style="left:95px;top:732px;width:1044px;height:14px;background:#f7f7f7"></div>
<div class="a" style="left:72px;top:732px;width:23px;height:14px;background:#ececec"></div>
<div class="a" style="left:1083px;top:732px;width:70px;height:14px;background:#ececec"></div>
<div class="t" style="right:347px;top:734px;font-size:12.5px;color:#111">10 &lt; 100</div>
<div class="a" style="left:214px;top:735px;width:750px;height:9px;border-radius:5px;background:#808080"></div>
<div class="a" style="left:1143px;top:317px;width:8px;height:267px;border-radius:4px;background:#808080"></div>
<div class="a" style="left:72px;top:748px;width:1081px;height:24px;background:#fff;border-top:2px solid #c4c4c4;border-bottom:1px solid #c4c4c4"></div>
<div class="a" style="left:1139px;top:750px;width:14px;height:21px;background:#f6f6f6"></div>
<div class="a" style="left:1142px;top:750px;width:8px;height:17px;border-radius:4px;background:#808080"></div>
<div class="t" style="left:77px;top:752px;font-size:13px;color:#1f1fd6"><i>Kommando:</i> layeradd</div>
<div class="t" style="left:73px;top:779px;font-size:13px;color:#111">Kommando:</div>
<div class="a" style="left:148px;top:776px;width:979px;height:18px;background:#fff"></div>
<div class="a" style="left:1127px;top:772px;width:26px;height:25px;background:linear-gradient(#f3f3f3,#e6e6e6);border:1px solid #b9b9b9"></div>
<div class="a" style="left:1133px;top:780px;width:14px;height:10px;border:1px solid #222;border-top:2px solid #111;background:#fff"></div>
<svg class="a" style="left:72px;top:146px" width="1067" height="586" viewBox="72 146 1067 586"><line x1="104.4" y1="163" x2="104.4" y2="170" stroke="#555" stroke-width="1"/><line x1="133.0" y1="163" x2="133.0" y2="170" stroke="#555" stroke-width="1"/><line x1="161.6" y1="163" x2="161.6" y2="170" stroke="#555" stroke-width="1"/><line x1="190.2" y1="163" x2="190.2" y2="170" stroke="#555" stroke-width="1"/><line x1="218.7" y1="163" x2="218.7" y2="170" stroke="#555" stroke-width="1"/><line x1="247.3" y1="163" x2="247.3" y2="170" stroke="#555" stroke-width="1"/><line x1="275.9" y1="163" x2="275.9" y2="170" stroke="#555" stroke-width="1"/><line x1="304.5" y1="163" x2="304.5" y2="170" stroke="#555" stroke-width="1"/><line x1="333.1" y1="163" x2="333.1" y2="170" stroke="#555" stroke-width="1"/><line x1="361.7" y1="163" x2="361.7" y2="170" stroke="#555" stroke-width="1"/><line x1="390.3" y1="163" x2="390.3" y2="170" stroke="#555" stroke-width="1"/><line x1="418.8" y1="163" x2="418.8" y2="170" stroke="#555" stroke-width="1"/><line x1="447.4" y1="163" x2="447.4" y2="170" stroke="#555" stroke-width="1"/><line x1="476.0" y1="163" x2="476.0" y2="170" stroke="#555" stroke-width="1"/><line x1="504.6" y1="163" x2="504.6" y2="170" stroke="#555" stroke-width="1"/><line x1="533.2" y1="163" x2="533.2" y2="170" stroke="#555" stroke-width="1"/><line x1="561.8" y1="163" x2="561.8" y2="170" stroke="#555" stroke-width="1"/><line x1="590.4" y1="163" x2="590.4" y2="170" stroke="#555" stroke-width="1"/><line x1="618.9" y1="163" x2="618.9" y2="170" stroke="#555" stroke-width="1"/><line x1="647.5" y1="163" x2="647.5" y2="170" stroke="#555" stroke-width="1"/><line x1="676.1" y1="163" x2="676.1" y2="170" stroke="#555" stroke-width="1"/><line x1="704.7" y1="163" x2="704.7" y2="170" stroke="#555" stroke-width="1"/><line x1="733.3" y1="163" x2="733.3" y2="170" stroke="#555" stroke-width="1"/><line x1="761.9" y1="163" x2="761.9" y2="170" stroke="#555" stroke-width="1"/><line x1="790.5" y1="163" x2="790.5" y2="170" stroke="#555" stroke-width="1"/><line x1="819.0" y1="163" x2="819.0" y2="170" stroke="#555" stroke-width="1"/><line x1="847.6" y1="163" x2="847.6" y2="170" stroke="#555" stroke-width="1"/><line x1="876.2" y1="163" x2="876.2" y2="170" stroke="#555" stroke-width="1"/><line x1="904.8" y1="163" x2="904.8" y2="170" stroke="#555" stroke-width="1"/><line x1="933.4" y1="163" x2="933.4" y2="170" stroke="#555" stroke-width="1"/><line x1="962.0" y1="163" x2="962.0" y2="170" stroke="#555" stroke-width="1"/><line x1="990.6" y1="163" x2="990.6" y2="170" stroke="#555" stroke-width="1"/><line x1="1019.2" y1="163" x2="1019.2" y2="170" stroke="#555" stroke-width="1"/><line x1="1047.7" y1="163" x2="1047.7" y2="170" stroke="#555" stroke-width="1"/><line x1="1076.3" y1="163" x2="1076.3" y2="170" stroke="#555" stroke-width="1"/><line x1="1104.9" y1="163" x2="1104.9" y2="170" stroke="#555" stroke-width="1"/><line x1="1133.5" y1="163" x2="1133.5" y2="170" stroke="#555" stroke-width="1"/><line x1="88" y1="726.9" x2="95" y2="726.9" stroke="#555" stroke-width="1"/><line x1="88" y1="698.4" x2="95" y2="698.4" stroke="#555" stroke-width="1"/><line x1="88" y1="669.8" x2="95" y2="669.8" stroke="#555" stroke-width="1"/><line x1="88" y1="641.2" x2="95" y2="641.2" stroke="#555" stroke-width="1"/><line x1="88" y1="612.6" x2="95" y2="612.6" stroke="#555" stroke-width="1"/><line x1="88" y1="584.0" x2="95" y2="584.0" stroke="#555" stroke-width="1"/><line x1="88" y1="555.4" x2="95" y2="555.4" stroke="#555" stroke-width="1"/><line x1="88" y1="526.8" x2="95" y2="526.8" stroke="#555" stroke-width="1"/><line x1="88" y1="498.3" x2="95" y2="498.3" stroke="#555" stroke-width="1"/><line x1="88" y1="469.7" x2="95" y2="469.7" stroke="#555" stroke-width="1"/><line x1="88" y1="441.1" x2="95" y2="441.1" stroke="#555" stroke-width="1"/><line x1="88" y1="412.5" x2="95" y2="412.5" stroke="#555" stroke-width="1"/><line x1="88" y1="383.9" x2="95" y2="383.9" stroke="#555" stroke-width="1"/><line x1="88" y1="355.3" x2="95" y2="355.3" stroke="#555" stroke-width="1"/><line x1="88" y1="326.7" x2="95" y2="326.7" stroke="#555" stroke-width="1"/><line x1="88" y1="298.2" x2="95" y2="298.2" stroke="#555" stroke-width="1"/><line x1="88" y1="269.6" x2="95" y2="269.6" stroke="#555" stroke-width="1"/><line x1="88" y1="241.0" x2="95" y2="241.0" stroke="#555" stroke-width="1"/><line x1="88" y1="212.4" x2="95" y2="212.4" stroke="#555" stroke-width="1"/><line x1="88" y1="183.8" x2="95" y2="183.8" stroke="#555" stroke-width="1"/><path d="M1020 160 L1032 160 L1026 166 Z" fill="#000"/><path d="M84 227 L90 233 L84 239 Z" fill="#000"/></svg>
<div class="a" style="left:95px;top:146px;width:1044px;height:17px;overflow:hidden">
<div class="t" style="left:-10.6px;width:40px;text-align:center;top:2.6px;font-size:9.5px;color:#222;letter-spacing:0.2px;-webkit-text-stroke:0">70</div>
<div class="t" style="left:18.0px;width:40px;text-align:center;top:2.6px;font-size:9.5px;color:#222;letter-spacing:0.2px;-webkit-text-stroke:0">80</div>
<div class="t" style="left:46.6px;width:40px;text-align:center;top:2.6px;font-size:9.5px;color:#222;letter-spacing:0.2px;-webkit-text-stroke:0">90</div>
<div class="t" style="left:75.2px;width:40px;text-align:center;top:2.6px;font-size:9.5px;color:#222;letter-spacing:0.2px;-webkit-text-stroke:0">100</div>
<div class="t" style="left:103.7px;width:40px;text-align:center;top:2.6px;font-size:9.5px;color:#222;letter-spacing:0.2px;-webkit-text-stroke:0">110</div>
<div class="t" style="left:132.3px;width:40px;text-align:center;top:2.6px;font-size:9.5px;color:#222;letter-spacing:0.2px;-webkit-text-stroke:0">120</div>
<div class="t" style="left:160.9px;width:40px;text-align:center;top:2.6px;font-size:9.5px;color:#222;letter-spacing:0.2px;-webkit-text-stroke:0">130</div>
<div class="t" style="left:189.5px;width:40px;text-align:center;top:2.6px;font-size:9.5px;color:#222;letter-spacing:0.2px;-webkit-text-stroke:0">140</div>
<div class="t" style="left:218.1px;width:40px;text-align:center;top:2.6px;font-size:9.5px;color:#222;letter-spacing:0.2px;-webkit-text-stroke:0">150</div>
<div class="t" style="left:246.7px;width:40px;text-align:center;top:2.6px;font-size:9.5px;color:#222;letter-spacing:0.2px;-webkit-text-stroke:0">160</div>
<div class="t" style="left:275.3px;width:40px;text-align:center;top:2.6px;font-size:9.5px;color:#222;letter-spacing:0.2px;-webkit-text-stroke:0">170</div>
<div class="t" style="left:303.8px;width:40px;text-align:center;top:2.6px;font-size:9.5px;color:#222;letter-spacing:0.2px;-webkit-text-stroke:0">180</div>
<div class="t" style="left:332.4px;width:40px;text-align:center;top:2.6px;font-size:9.5px;color:#222;letter-spacing:0.2px;-webkit-text-stroke:0">190</div>
<div class="t" style="left:361.0px;width:40px;text-align:center;top:2.6px;font-size:9.5px;color:#222;letter-spacing:0.2px;-webkit-text-stroke:0">200</div>
<div class="t" style="left:389.6px;width:40px;text-align:center;top:2.6px;font-size:9.5px;color:#222;letter-spacing:0.2px;-webkit-text-stroke:0">210</div>
<div class="t" style="left:418.2px;width:40px;text-align:center;top:2.6px;font-size:9.5px;color:#222;letter-spacing:0.2px;-webkit-text-stroke:0">220</div>
<div class="t" style="left:446.8px;width:40px;text-align:center;top:2.6px;font-size:9.5px;color:#222;letter-spacing:0.2px;-webkit-text-stroke:0">230</div>
<div class="t" style="left:475.4px;width:40px;text-align:center;top:2.6px;font-size:9.5px;color:#222;letter-spacing:0.2px;-webkit-text-stroke:0">240</div>
<div class="t" style="left:503.9px;width:40px;text-align:center;top:2.6px;font-size:9.5px;color:#222;letter-spacing:0.2px;-webkit-text-stroke:0">250</div>
<div class="t" style="left:532.5px;width:40px;text-align:center;top:2.6px;font-size:9.5px;color:#222;letter-spacing:0.2px;-webkit-text-stroke:0">260</div>
<div class="t" style="left:561.1px;width:40px;text-align:center;top:2.6px;font-size:9.5px;color:#222;letter-spacing:0.2px;-webkit-text-stroke:0">270</div>
<div class="t" style="left:589.7px;width:40px;text-align:center;top:2.6px;font-size:9.5px;color:#222;letter-spacing:0.2px;-webkit-text-stroke:0">280</div>
<div class="t" style="left:618.3px;width:40px;text-align:center;top:2.6px;font-size:9.5px;color:#222;letter-spacing:0.2px;-webkit-text-stroke:0">290</div>
<div class="t" style="left:646.9px;width:40px;text-align:center;top:2.6px;font-size:9.5px;color:#222;letter-spacing:0.2px;-webkit-text-stroke:0">300</div>
<div class="t" style="left:675.5px;width:40px;text-align:center;top:2.6px;font-size:9.5px;color:#222;letter-spacing:0.2px;-webkit-text-stroke:0">310</div>
<div class="t" style="left:704.0px;width:40px;text-align:center;top:2.6px;font-size:9.5px;color:#222;letter-spacing:0.2px;-webkit-text-stroke:0">320</div>
<div class="t" style="left:732.6px;width:40px;text-align:center;top:2.6px;font-size:9.5px;color:#222;letter-spacing:0.2px;-webkit-text-stroke:0">330</div>
<div class="t" style="left:761.2px;width:40px;text-align:center;top:2.6px;font-size:9.5px;color:#222;letter-spacing:0.2px;-webkit-text-stroke:0">340</div>
<div class="t" style="left:789.8px;width:40px;text-align:center;top:2.6px;font-size:9.5px;color:#222;letter-spacing:0.2px;-webkit-text-stroke:0">350</div>
<div class="t" style="left:818.4px;width:40px;text-align:center;top:2.6px;font-size:9.5px;color:#222;letter-spacing:0.2px;-webkit-text-stroke:0">360</div>
<div class="t" style="left:847.0px;width:40px;text-align:center;top:2.6px;font-size:9.5px;color:#222;letter-spacing:0.2px;-webkit-text-stroke:0">370</div>
<div class="t" style="left:875.6px;width:40px;text-align:center;top:2.6px;font-size:9.5px;color:#222;letter-spacing:0.2px;-webkit-text-stroke:0">380</div>
<div class="t" style="left:904.2px;width:40px;text-align:center;top:2.6px;font-size:9.5px;color:#222;letter-spacing:0.2px;-webkit-text-stroke:0">390</div>
<div class="t" style="left:932.7px;width:40px;text-align:center;top:2.6px;font-size:9.5px;color:#222;letter-spacing:0.2px;-webkit-text-stroke:0">400</div>
<div class="t" style="left:961.3px;width:40px;text-align:center;top:2.6px;font-size:9.5px;color:#222;letter-spacing:0.2px;-webkit-text-stroke:0">410</div>
<div class="t" style="left:989.9px;width:40px;text-align:center;top:2.6px;font-size:9.5px;color:#222;letter-spacing:0.2px;-webkit-text-stroke:0">420</div>
<div class="t" style="left:1018.5px;width:40px;text-align:center;top:2.6px;font-size:9.5px;color:#222;letter-spacing:0.2px;-webkit-text-stroke:0">430</div>
</div>
<div class="t" style="left:58.5px;top:721.9px;width:40px;height:10px;text-align:center;font-size:9.5px;color:#222;letter-spacing:0.2px;-webkit-text-stroke:0;transform:rotate(-90deg)">90</div>
<div class="t" style="left:58.5px;top:693.4px;width:40px;height:10px;text-align:center;font-size:9.5px;color:#222;letter-spacing:0.2px;-webkit-text-stroke:0;transform:rotate(-90deg)">100</div>
<div class="t" style="left:58.5px;top:664.8px;width:40px;height:10px;text-align:center;font-size:9.5px;color:#222;letter-spacing:0.2px;-webkit-text-stroke:0;transform:rotate(-90deg)">110</div>
<div class="t" style="left:58.5px;top:636.2px;width:40px;height:10px;text-align:center;font-size:9.5px;color:#222;letter-spacing:0.2px;-webkit-text-stroke:0;transform:rotate(-90deg)">120</div>
<div class="t" style="left:58.5px;top:607.6px;width:40px;height:10px;text-align:center;font-size:9.5px;color:#222;letter-spacing:0.2px;-webkit-text-stroke:0;transform:rotate(-90deg)">130</div>
<div class="t" style="left:58.5px;top:579.0px;width:40px;height:10px;text-align:center;font-size:9.5px;color:#222;letter-spacing:0.2px;-webkit-text-stroke:0;transform:rotate(-90deg)">140</div>
<div class="t" style="left:58.5px;top:550.4px;width:40px;height:10px;text-align:center;font-size:9.5px;color:#222;letter-spacing:0.2px;-webkit-text-stroke:0;transform:rotate(-90deg)">150</div>
<div class="t" style="left:58.5px;top:521.8px;width:40px;height:10px;text-align:center;font-size:9.5px;color:#222;letter-spacing:0.2px;-webkit-text-stroke:0;transform:rotate(-90deg)">160</div>
<div class="t" style="left:58.5px;top:493.3px;width:40px;height:10px;text-align:center;font-size:9.5px;color:#222;letter-spacing:0.2px;-webkit-text-stroke:0;transform:rotate(-90deg)">170</div>
<div class="t" style="left:58.5px;top:464.7px;width:40px;height:10px;text-align:center;font-size:9.5px;color:#222;letter-spacing:0.2px;-webkit-text-stroke:0;transform:rotate(-90deg)">180</div>
<div class="t" style="left:58.5px;top:436.1px;width:40px;height:10px;text-align:center;font-size:9.5px;color:#222;letter-spacing:0.2px;-webkit-text-stroke:0;transform:rotate(-90deg)">190</div>
<div class="t" style="left:58.5px;top:407.5px;width:40px;height:10px;text-align:center;font-size:9.5px;color:#222;letter-spacing:0.2px;-webkit-text-stroke:0;transform:rotate(-90deg)">200</div>
<div class="t" style="left:58.5px;top:378.9px;width:40px;height:10px;text-align:center;font-size:9.5px;color:#222;letter-spacing:0.2px;-webkit-text-stroke:0;transform:rotate(-90deg)">210</div>
<div class="t" style="left:58.5px;top:350.3px;width:40px;height:10px;text-align:center;font-size:9.5px;color:#222;letter-spacing:0.2px;-webkit-text-stroke:0;transform:rotate(-90deg)">220</div>
<div class="t" style="left:58.5px;top:321.7px;width:40px;height:10px;text-align:center;font-size:9.5px;color:#222;letter-spacing:0.2px;-webkit-text-stroke:0;transform:rotate(-90deg)">230</div>
<div class="t" style="left:58.5px;top:293.2px;width:40px;height:10px;text-align:center;font-size:9.5px;color:#222;letter-spacing:0.2px;-webkit-text-stroke:0;transform:rotate(-90deg)">240</div>
<div class="t" style="left:58.5px;top:264.6px;width:40px;height:10px;text-align:center;font-size:9.5px;color:#222;letter-spacing:0.2px;-webkit-text-stroke:0;transform:rotate(-90deg)">250</div>
<div class="t" style="left:58.5px;top:236.0px;width:40px;height:10px;text-align:center;font-size:9.5px;color:#222;letter-spacing:0.2px;-webkit-text-stroke:0;transform:rotate(-90deg)">260</div>
<div class="t" style="left:58.5px;top:207.4px;width:40px;height:10px;text-align:center;font-size:9.5px;color:#222;letter-spacing:0.2px;-webkit-text-stroke:0;transform:rotate(-90deg)">270</div>
<div class="t" style="left:58.5px;top:178.8px;width:40px;height:10px;text-align:center;font-size:9.5px;color:#222;letter-spacing:0.2px;-webkit-text-stroke:0;transform:rotate(-90deg)">280</div>
<svg class="a" style="left:95px;top:170px" width="1044" height="562" viewBox="95 170 1044 562"><rect x="189.41" y="170" width="1.5" height="562" fill="#1c1c1c"/><rect x="475.27" y="170" width="1.5" height="562" fill="#1c1c1c"/><rect x="761.13" y="170" width="1.5" height="562" fill="#1c1c1c"/><rect x="1046.99" y="170" width="1.5" height="562" fill="#1c1c1c"/><rect x="95" y="697.61" width="1044" height="1.5" fill="#1c1c1c"/><rect x="95" y="411.75" width="1044" height="1.5" fill="#1c1c1c"/><rect x="103.9" y="726.4" width="1.1" height="1.1" fill="#505050"/><rect x="103.9" y="697.9" width="1.1" height="1.1" fill="#505050"/><rect x="103.9" y="669.3" width="1.1" height="1.1" fill="#505050"/><rect x="103.9" y="640.7" width="1.1" height="1.1" fill="#505050"/><rect x="103.9" y="612.1" width="1.1" height="1.1" fill="#505050"/><rect x="103.9" y="583.5" width="1.1" height="1.1" fill="#505050"/><rect x="103.9" y="554.9" width="1.1" height="1.1" fill="#505050"/><rect x="103.9" y="526.3" width="1.1" height="1.1" fill="#505050"/><rect x="103.9" y="497.8" width="1.1" height="1.1" fill="#505050"/><rect x="103.9" y="469.2" width="1.1" height="1.1" fill="#505050"/><rect x="103.9" y="440.6" width="1.1" height="1.1" fill="#505050"/><rect x="103.9" y="412.0" width="1.1" height="1.1" fill="#505050"/><rect x="103.9" y="383.4" width="1.1" height="1.1" fill="#505050"/><rect x="103.9" y="354.8" width="1.1" height="1.1" fill="#505050"/><rect x="103.9" y="326.2" width="1.1" height="1.1" fill="#505050"/><rect x="103.9" y="297.7" width="1.1" height="1.1" fill="#505050"/><rect x="103.9" y="269.1" width="1.1" height="1.1" fill="#505050"/><rect x="103.9" y="240.5" width="1.1" height="1.1" fill="#505050"/><rect x="103.9" y="211.9" width="1.1" height="1.1" fill="#505050"/><rect x="103.9" y="183.3" width="1.1" height="1.1" fill="#505050"/><rect x="132.5" y="726.4" width="1.1" height="1.1" fill="#505050"/><rect x="132.5" y="697.9" width="1.1" height="1.1" fill="#505050"/><rect x="132.5" y="669.3" width="1.1" height="1.1" fill="#505050"/><rect x="132.5" y="640.7" width="1.1" height="1.1" fill="#505050"/><rect x="132.5" y="612.1" width="1.1" height="1.1" fill="#505050"/><rect x="132.5" y="583.5" width="1.1" height="1.1" fill="#505050"/><rect x="132.5" y="554.9" width="1.1" height="1.1" fill="#505050"/><rect x="132.5" y="526.3" width="1.1" height="1.1" fill="#505050"/><rect x="132.5" y="497.8" width="1.1" height="1.1" fill="#505050"/><rect x="132.5" y="469.2" width="1.1" height="1.1" fill="#505050"/><rect x="132.5" y="440.6" width="1.1" height="1.1" fill="#505050"/><rect x="132.5" y="412.0" width="1.1" height="1.1" fill="#505050"/><rect x="132.5" y="383.4" width="1.1" height="1.1" fill="#505050"/><rect x="132.5" y="354.8" width="1.1" height="1.1" fill="#505050"/><rect x="132.5" y="326.2" width="1.1" height="1.1" fill="#505050"/><rect x="132.5" y="297.7" width="1.1" height="1.1" fill="#505050"/><rect x="132.5" y="269.1" width="1.1" height="1.1" fill="#505050"/><rect x="132.5" y="240.5" width="1.1" height="1.1" fill="#505050"/><rect x="132.5" y="211.9" width="1.1" height="1.1" fill="#505050"/><rect x="132.5" y="183.3" width="1.1" height="1.1" fill="#505050"/><rect x="161.1" y="726.4" width="1.1" height="1.1" fill="#505050"/><rect x="161.1" y="697.9" width="1.1" height="1.1" fill="#505050"/><rect x="161.1" y="669.3" width="1.1" height="1.1" fill="#505050"/><rect x="161.1" y="640.7" width="1.1" height="1.1" fill="#505050"/><rect x="161.1" y="612.1" width="1.1" height="1.1" fill="#505050"/><rect x="161.1" y="583.5" width="1.1" height="1.1" fill="#505050"/><rect x="161.1" y="554.9" width="1.1" height="1.1" fill="#505050"/><rect x="161.1" y="526.3" width="1.1" height="1.1" fill="#505050"/><rect x="161.1" y="497.8" width="1.1" height="1.1" fill="#505050"/><rect x="161.1" y="469.2" width="1.1" height="1.1" fill="#505050"/><rect x="161.1" y="440.6" width="1.1" height="1.1" fill="#505050"/><rect x="161.1" y="412.0" width="1.1" height="1.1" fill="#505050"/><rect x="161.1" y="383.4" width="1.1" height="1.1" fill="#505050"/><rect x="161.1" y="354.8" width="1.1" height="1.1" fill="#505050"/><rect x="161.1" y="326.2" width="1.1" height="1.1" fill="#505050"/><rect x="161.1" y="297.7" width="1.1" height="1.1" fill="#505050"/><rect x="161.1" y="269.1" width="1.1" height="1.1" fill="#505050"/><rect x="161.1" y="240.5" width="1.1" height="1.1" fill="#505050"/><rect x="161.1" y="211.9" width="1.1" height="1.1" fill="#505050"/><rect x="161.1" y="183.3" width="1.1" height="1.1" fill="#505050"/><rect x="189.7" y="726.4" width="1.1" height="1.1" fill="#505050"/><rect x="189.7" y="697.9" width="1.1" height="1.1" fill="#505050"/><rect x="189.7" y="669.3" width="1.1" height="1.1" fill="#505050"/><rect x="189.7" y="640.7" width="1.1" height="1.1" fill="#505050"/><rect x="189.7" y="612.1" width="1.1" height="1.1" fill="#505050"/><rect x="189.7" y="583.5" width="1.1" height="1.1" fill="#505050"/><rect x="189.7" y="554.9" width="1.1" height="1.1" fill="#505050"/><rect x="189.7" y="526.3" width="1.1" height="1.1" fill="#505050"/><rect x="189.7" y="497.8" width="1.1" height="1.1" fill="#505050"/><rect x="189.7" y="469.2" width="1.1" height="1.1" fill="#505050"/><rect x="189.7" y="440.6" width="1.1" height="1.1" fill="#505050"/><rect x="189.7" y="412.0" width="1.1" height="1.1" fill="#505050"/><rect x="189.7" y="383.4" width="1.1" height="1.1" fill="#505050"/><rect x="189.7" y="354.8" width="1.1" height="1.1" fill="#505050"/><rect x="189.7" y="326.2" width="1.1" height="1.1" fill="#505050"/><rect x="189.7" y="297.7" width="1.1" height="1.1" fill="#505050"/><rect x="189.7" y="269.1" width="1.1" height="1.1" fill="#505050"/><rect x="189.7" y="240.5" width="1.1" height="1.1" fill="#505050"/><rect x="189.7" y="211.9" width="1.1" height="1.1" fill="#505050"/><rect x="189.7" y="183.3" width="1.1" height="1.1" fill="#505050"/><rect x="218.2" y="726.4" width="1.1" height="1.1" fill="#505050"/><rect x="218.2" y="697.9" width="1.1" height="1.1" fill="#505050"/><rect x="218.2" y="669.3" width="1.1" height="1.1" fill="#505050"/><rect x="218.2" y="640.7" width="1.1" height="1.1" fill="#505050"/><rect x="218.2" y="612.1" width="1.1" height="1.1" fill="#505050"/><rect x="218.2" y="583.5" width="1.1" height="1.1" fill="#505050"/><rect x="218.2" y="554.9" width="1.1" height="1.1" fill="#505050"/><rect x="218.2" y="526.3" width="1.1" height="1.1" fill="#505050"/><rect x="218.2" y="497.8" width="1.1" height="1.1" fill="#505050"/><rect x="218.2" y="469.2" width="1.1" height="1.1" fill="#505050"/><rect x="218.2" y="440.6" width="1.1" height="1.1" fill="#505050"/><rect x="218.2" y="412.0" width="1.1" height="1.1" fill="#505050"/><rect x="218.2" y="383.4" width="1.1" height="1.1" fill="#505050"/><rect x="218.2" y="354.8" width="1.1" height="1.1" fill="#505050"/><rect x="218.2" y="326.2" width="1.1" height="1.1" fill="#505050"/><rect x="218.2" y="297.7" width="1.1" height="1.1" fill="#505050"/><rect x="218.2" y="269.1" width="1.1" height="1.1" fill="#505050"/><rect x="218.2" y="240.5" width="1.1" height="1.1" fill="#505050"/><rect x="218.2" y="211.9" width="1.1" height="1.1" fill="#505050"/><rect x="218.2" y="183.3" width="1.1" height="1.1" fill="#505050"/><rect x="246.8" y="726.4" width="1.1" height="1.1" fill="#505050"/><rect x="246.8" y="697.9" width="1.1" height="1.1" fill="#505050"/><rect x="246.8" y="669.3" width="1.1" height="1.1" fill="#505050"/><rect x="246.8" y="640.7" width="1.1" height="1.1" fill="#505050"/><rect x="246.8" y="612.1" width="1.1" height="1.1" fill="#505050"/><rect x="246.8" y="583.5" width="1.1" height="1.1" fill="#505050"/><rect x="246.8" y="554.9" width="1.1" height="1.1" fill="#505050"/><rect x="246.8" y="526.3" width="1.1" height="1.1" fill="#505050"/><rect x="246.8" y="497.8" width="1.1" height="1.1" fill="#505050"/><rect x="246.8" y="469.2" width="1.1" height="1.1" fill="#505050"/><rect x="246.8" y="440.6" width="1.1" height="1.1" fill="#505050"/><rect x="246.8" y="412.0" width="1.1" height="1.1" fill="#505050"/><rect x="246.8" y="383.4" width="1.1" height="1.1" fill="#505050"/><rect x="246.8" y="354.8" width="1.1" height="1.1" fill="#505050"/><rect x="246.8" y="326.2" width="1.1" height="1.1" fill="#505050"/><rect x="246.8" y="297.7" width="1.1" height="1.1" fill="#505050"/><rect x="246.8" y="269.1" width="1.1" height="1.1" fill="#505050"/><rect x="246.8" y="240.5" width="1.1" height="1.1" fill="#505050"/><rect x="246.8" y="211.9" width="1.1" height="1.1" fill="#505050"/><rect x="246.8" y="183.3" width="1.1" height="1.1" fill="#505050"/><rect x="275.4" y="726.4" width="1.1" height="1.1" fill="#505050"/><rect x="275.4" y="697.9" width="1.1" height="1.1" fill="#505050"/><rect x="275.4" y="669.3" width="1.1" height="1.1" fill="#505050"/><rect x="275.4" y="640.7" width="1.1" height="1.1" fill="#505050"/><rect x="275.4" y="612.1" width="1.1" height="1.1" fill="#505050"/><rect x="275.4" y="583.5" width="1.1" height="1.1" fill="#505050"/><rect x="275.4" y="554.9" width="1.1" height="1.1" fill="#505050"/><rect x="275.4" y="526.3" width="1.1" height="1.1" fill="#505050"/><rect x="275.4" y="497.8" width="1.1" height="1.1" fill="#505050"/><rect x="275.4" y="469.2" width="1.1" height="1.1" fill="#505050"/><rect x="275.4" y="440.6" width="1.1" height="1.1" fill="#505050"/><rect x="275.4" y="412.0" width="1.1" height="1.1" fill="#505050"/><rect x="275.4" y="383.4" width="1.1" height="1.1" fill="#505050"/><rect x="275.4" y="354.8" width="1.1" height="1.1" fill="#505050"/><rect x="275.4" y="326.2" width="1.1" height="1.1" fill="#505050"/><rect x="275.4" y="297.7" width="1.1" height="1.1" fill="#505050"/><rect x="275.4" y="269.1" width="1.1" height="1.1" fill="#505050"/><rect x="275.4" y="240.5" width="1.1" height="1.1" fill="#505050"/><rect x="275.4" y="211.9" width="1.1" height="1.1" fill="#505050"/><rect x="275.4" y="183.3" width="1.1" height="1.1" fill="#505050"/><rect x="304.0" y="726.4" width="1.1" height="1.1" fill="#505050"/><rect x="304.0" y="697.9" width="1.1" height="1.1" fill="#505050"/><rect x="304.0" y="669.3" width="1.1" height="1.1" fill="#505050"/><rect x="304.0" y="640.7" width="1.1" height="1.1" fill="#505050"/><rect x="304.0" y="612.1" width="1.1" height="1.1" fill="#505050"/><rect x="304.0" y="583.5" width="1.1" height="1.1" fill="#505050"/><rect x="304.0" y="554.9" width="1.1" height="1.1" fill="#505050"/><rect x="304.0" y="526.3" width="1.1" height="1.1" fill="#505050"/><rect x="304.0" y="497.8" width="1.1" height="1.1" fill="#505050"/><rect x="304.0" y="469.2" width="1.1" height="1.1" fill="#505050"/><rect x="304.0" y="440.6" width="1.1" height="1.1" fill="#505050"/><rect x="304.0" y="412.0" width="1.1" height="1.1" fill="#505050"/><rect x="304.0" y="383.4" width="1.1" height="1.1" fill="#505050"/><rect x="304.0" y="354.8" width="1.1" height="1.1" fill="#505050"/><rect x="304.0" y="326.2" width="1.1" height="1.1" fill="#505050"/><rect x="304.0" y="297.7" width="1.1" height="1.1" fill="#505050"/><rect x="304.0" y="269.1" width="1.1" height="1.1" fill="#505050"/><rect x="304.0" y="240.5" width="1.1" height="1.1" fill="#505050"/><rect x="304.0" y="211.9" width="1.1" height="1.1" fill="#505050"/><rect x="304.0" y="183.3" width="1.1" height="1.1" fill="#505050"/><rect x="332.6" y="726.4" width="1.1" height="1.1" fill="#505050"/><rect x="332.6" y="697.9" width="1.1" height="1.1" fill="#505050"/><rect x="332.6" y="669.3" width="1.1" height="1.1" fill="#505050"/><rect x="332.6" y="640.7" width="1.1" height="1.1" fill="#505050"/><rect x="332.6" y="612.1" width="1.1" height="1.1" fill="#505050"/><rect x="332.6" y="583.5" width="1.1" height="1.1" fill="#505050"/><rect x="332.6" y="554.9" width="1.1" height="1.1" fill="#505050"/><rect x="332.6" y="526.3" width="1.1" height="1.1" fill="#505050"/><rect x="332.6" y="497.8" width="1.1" height="1.1" fill="#505050"/><rect x="332.6" y="469.2" width="1.1" height="1.1" fill="#505050"/><rect x="332.6" y="440.6" width="1.1" height="1.1" fill="#505050"/><rect x="332.6" y="412.0" width="1.1" height="1.1" fill="#505050"/><rect x="332.6" y="383.4" width="1.1" height="1.1" fill="#505050"/><rect x="332.6" y="354.8" width="1.1" height="1.1" fill="#505050"/><rect x="332.6" y="326.2" width="1.1" height="1.1" fill="#505050"/><rect x="332.6" y="297.7" width="1.1" height="1.1" fill="#505050"/><rect x="332.6" y="269.1" width="1.1" height="1.1" fill="#505050"/><rect x="332.6" y="240.5" width="1.1" height="1.1" fill="#505050"/><rect x="332.6" y="211.9" width="1.1" height="1.1" fill="#505050"/><rect x="332.6" y="183.3" width="1.1" height="1.1" fill="#505050"/><rect x="361.2" y="726.4" width="1.1" height="1.1" fill="#505050"/><rect x="361.2" y="697.9" width="1.1" height="1.1" fill="#505050"/><rect x="361.2" y="669.3" width="1.1" height="1.1" fill="#505050"/><rect x="361.2" y="640.7" width="1.1" height="1.1" fill="#505050"/><rect x="361.2" y="612.1" width="1.1" height="1.1" fill="#505050"/><rect x="361.2" y="583.5" width="1.1" height="1.1" fill="#505050"/><rect x="361.2" y="554.9" width="1.1" height="1.1" fill="#505050"/><rect x="361.2" y="526.3" width="1.1" height="1.1" fill="#505050"/><rect x="361.2" y="497.8" width="1.1" height="1.1" fill="#505050"/><rect x="361.2" y="469.2" width="1.1" height="1.1" fill="#505050"/><rect x="361.2" y="440.6" width="1.1" height="1.1" fill="#505050"/><rect x="361.2" y="412.0" width="1.1" height="1.1" fill="#505050"/><rect x="361.2" y="383.4" width="1.1" height="1.1" fill="#505050"/><rect x="361.2" y="354.8" width="1.1" height="1.1" fill="#505050"/><rect x="361.2" y="326.2" width="1.1" height="1.1" fill="#505050"/><rect x="361.2" y="297.7" width="1.1" height="1.1" fill="#505050"/><rect x="361.2" y="269.1" width="1.1" height="1.1" fill="#505050"/><rect x="361.2" y="240.5" width="1.1" height="1.1" fill="#505050"/><rect x="361.2" y="211.9" width="1.1" height="1.1" fill="#505050"/><rect x="361.2" y="183.3" width="1.1" height="1.1" fill="#505050"/><rect x="389.8" y="726.4" width="1.1" height="1.1" fill="#505050"/><rect x="389.8" y="697.9" width="1.1" height="1.1" fill="#505050"/><rect x="389.8" y="669.3" width="1.1" height="1.1" fill="#505050"/><rect x="389.8" y="640.7" width="1.1" height="1.1" fill="#505050"/><rect x="389.8" y="612.1" width="1.1" height="1.1" fill="#505050"/><rect x="389.8" y="583.5" width="1.1" height="1.1" fill="#505050"/><rect x="389.8" y="554.9" width="1.1" height="1.1" fill="#505050"/><rect x="389.8" y="526.3" width="1.1" height="1.1" fill="#505050"/><rect x="389.8" y="497.8" width="1.1" height="1.1" fill="#505050"/><rect x="389.8" y="469.2" width="1.1" height="1.1" fill="#505050"/><rect x="389.8" y="440.6" width="1.1" height="1.1" fill="#505050"/><rect x="389.8" y="412.0" width="1.1" height="1.1" fill="#505050"/><rect x="389.8" y="383.4" width="1.1" height="1.1" fill="#505050"/><rect x="389.8" y="354.8" width="1.1" height="1.1" fill="#505050"/><rect x="389.8" y="326.2" width="1.1" height="1.1" fill="#505050"/><rect x="389.8" y="297.7" width="1.1" height="1.1" fill="#505050"/><rect x="389.8" y="269.1" width="1.1" height="1.1" fill="#505050"/><rect x="389.8" y="240.5" width="1.1" height="1.1" fill="#505050"/><rect x="389.8" y="211.9" width="1.1" height="1.1" fill="#505050"/><rect x="389.8" y="183.3" width="1.1" height="1.1" fill="#505050"/><rect x="418.3" y="726.4" width="1.1" height="1.1" fill="#505050"/><rect x="418.3" y="697.9" width="1.1" height="1.1" fill="#505050"/><rect x="418.3" y="669.3" width="1.1" height="1.1" fill="#505050"/><rect x="418.3" y="640.7" width="1.1" height="1.1" fill="#505050"/><rect x="418.3" y="612.1" width="1.1" height="1.1" fill="#505050"/><rect x="418.3" y="583.5" width="1.1" height="1.1" fill="#505050"/><rect x="418.3" y="554.9" width="1.1" height="1.1" fill="#505050"/><rect x="418.3" y="526.3" width="1.1" height="1.1" fill="#505050"/><rect x="418.3" y="497.8" width="1.1" height="1.1" fill="#505050"/><rect x="418.3" y="469.2" width="1.1" height="1.1" fill="#505050"/><rect x="418.3" y="440.6" width="1.1" height="1.1" fill="#505050"/><rect x="418.3" y="412.0" width="1.1" height="1.1" fill="#505050"/><rect x="418.3" y="383.4" width="1.1" height="1.1" fill="#505050"/><rect x="418.3" y="354.8" width="1.1" height="1.1" fill="#505050"/><rect x="418.3" y="326.2" width="1.1" height="1.1" fill="#505050"/><rect x="418.3" y="297.7" width="1.1" height="1.1" fill="#505050"/><rect x="418.3" y="269.1" width="1.1" height="1.1" fill="#505050"/><rect x="418.3" y="240.5" width="1.1" height="1.1" fill="#505050"/><rect x="418.3" y="211.9" width="1.1" height="1.1" fill="#505050"/><rect x="418.3" y="183.3" width="1.1" height="1.1" fill="#505050"/><rect x="446.9" y="726.4" width="1.1" height="1.1" fill="#505050"/><rect x="446.9" y="697.9" width="1.1" height="1.1" fill="#505050"/><rect x="446.9" y="669.3" width="1.1" height="1.1" fill="#505050"/><rect x="446.9" y="640.7" width="1.1" height="1.1" fill="#505050"/><rect x="446.9" y="612.1" width="1.1" height="1.1" fill="#505050"/><rect x="446.9" y="583.5" width="1.1" height="1.1" fill="#505050"/><rect x="446.9" y="554.9" width="1.1" height="1.1" fill="#505050"/><rect x="446.9" y="526.3" width="1.1" height="1.1" fill="#505050"/><rect x="446.9" y="497.8" width="1.1" height="1.1" fill="#505050"/><rect x="446.9" y="469.2" width="1.1" height="1.1" fill="#505050"/><rect x="446.9" y="440.6" width="1.1" height="1.1" fill="#505050"/><rect x="446.9" y="412.0" width="1.1" height="1.1" fill="#505050"/><rect x="446.9" y="383.4" width="1.1" height="1.1" fill="#505050"/><rect x="446.9" y="354.8" width="1.1" height="1.1" fill="#505050"/><rect x="446.9" y="326.2" width="1.1" height="1.1" fill="#505050"/><rect x="446.9" y="297.7" width="1.1" height="1.1" fill="#505050"/><rect x="446.9" y="269.1" width="1.1" height="1.1" fill="#505050"/><rect x="446.9" y="240.5" width="1.1" height="1.1" fill="#505050"/><rect x="446.9" y="211.9" width="1.1" height="1.1" fill="#505050"/><rect x="446.9" y="183.3" width="1.1" height="1.1" fill="#505050"/><rect x="475.5" y="726.4" width="1.1" height="1.1" fill="#505050"/><rect x="475.5" y="697.9" width="1.1" height="1.1" fill="#505050"/><rect x="475.5" y="669.3" width="1.1" height="1.1" fill="#505050"/><rect x="475.5" y="640.7" width="1.1" height="1.1" fill="#505050"/><rect x="475.5" y="612.1" width="1.1" height="1.1" fill="#505050"/><rect x="475.5" y="583.5" width="1.1" height="1.1" fill="#505050"/><rect x="475.5" y="554.9" width="1.1" height="1.1" fill="#505050"/><rect x="475.5" y="526.3" width="1.1" height="1.1" fill="#505050"/><rect x="475.5" y="497.8" width="1.1" height="1.1" fill="#505050"/><rect x="475.5" y="469.2" width="1.1" height="1.1" fill="#505050"/><rect x="475.5" y="440.6" width="1.1" height="1.1" fill="#505050"/><rect x="475.5" y="412.0" width="1.1" height="1.1" fill="#505050"/><rect x="475.5" y="383.4" width="1.1" height="1.1" fill="#505050"/><rect x="475.5" y="354.8" width="1.1" height="1.1" fill="#505050"/><rect x="475.5" y="326.2" width="1.1" height="1.1" fill="#505050"/><rect x="475.5" y="297.7" width="1.1" height="1.1" fill="#505050"/><rect x="475.5" y="269.1" width="1.1" height="1.1" fill="#505050"/><rect x="475.5" y="240.5" width="1.1" height="1.1" fill="#505050"/><rect x="475.5" y="211.9" width="1.1" height="1.1" fill="#505050"/><rect x="475.5" y="183.3" width="1.1" height="1.1" fill="#505050"/><rect x="504.1" y="726.4" width="1.1" height="1.1" fill="#505050"/><rect x="504.1" y="697.9" width="1.1" height="1.1" fill="#505050"/><rect x="504.1" y="669.3" width="1.1" height="1.1" fill="#505050"/><rect x="504.1" y="640.7" width="1.1" height="1.1" fill="#505050"/><rect x="504.1" y="612.1" width="1.1" height="1.1" fill="#505050"/><rect x="504.1" y="583.5" width="1.1" height="1.1" fill="#505050"/><rect x="504.1" y="554.9" width="1.1" height="1.1" fill="#505050"/><rect x="504.1" y="526.3" width="1.1" height="1.1" fill="#505050"/><rect x="504.1" y="497.8" width="1.1" height="1.1" fill="#505050"/><rect x="504.1" y="469.2" width="1.1" height="1.1" fill="#505050"/><rect x="504.1" y="440.6" width="1.1" height="1.1" fill="#505050"/><rect x="504.1" y="412.0" width="1.1" height="1.1" fill="#505050"/><rect x="504.1" y="383.4" width="1.1" height="1.1" fill="#505050"/><rect x="504.1" y="354.8" width="1.1" height="1.1" fill="#505050"/><rect x="504.1" y="326.2" width="1.1" height="1.1" fill="#505050"/><rect x="504.1" y="297.7" width="1.1" height="1.1" fill="#505050"/><rect x="504.1" y="269.1" width="1.1" height="1.1" fill="#505050"/><rect x="504.1" y="240.5" width="1.1" height="1.1" fill="#505050"/><rect x="504.1" y="211.9" width="1.1" height="1.1" fill="#505050"/><rect x="504.1" y="183.3" width="1.1" height="1.1" fill="#505050"/><rect x="532.7" y="726.4" width="1.1" height="1.1" fill="#505050"/><rect x="532.7" y="697.9" width="1.1" height="1.1" fill="#505050"/><rect x="532.7" y="669.3" width="1.1" height="1.1" fill="#505050"/><rect x="532.7" y="640.7" width="1.1" height="1.1" fill="#505050"/><rect x="532.7" y="612.1" width="1.1" height="1.1" fill="#505050"/><rect x="532.7" y="583.5" width="1.1" height="1.1" fill="#505050"/><rect x="532.7" y="554.9" width="1.1" height="1.1" fill="#505050"/><rect x="532.7" y="526.3" width="1.1" height="1.1" fill="#505050"/><rect x="532.7" y="497.8" width="1.1" height="1.1" fill="#505050"/><rect x="532.7" y="469.2" width="1.1" height="1.1" fill="#505050"/><rect x="532.7" y="440.6" width="1.1" height="1.1" fill="#505050"/><rect x="532.7" y="412.0" width="1.1" height="1.1" fill="#505050"/><rect x="532.7" y="383.4" width="1.1" height="1.1" fill="#505050"/><rect x="532.7" y="354.8" width="1.1" height="1.1" fill="#505050"/><rect x="532.7" y="326.2" width="1.1" height="1.1" fill="#505050"/><rect x="532.7" y="297.7" width="1.1" height="1.1" fill="#505050"/><rect x="532.7" y="269.1" width="1.1" height="1.1" fill="#505050"/><rect x="532.7" y="240.5" width="1.1" height="1.1" fill="#505050"/><rect x="532.7" y="211.9" width="1.1" height="1.1" fill="#505050"/><rect x="532.7" y="183.3" width="1.1" height="1.1" fill="#505050"/><rect x="561.3" y="726.4" width="1.1" height="1.1" fill="#505050"/><rect x="561.3" y="697.9" width="1.1" height="1.1" fill="#505050"/><rect x="561.3" y="669.3" width="1.1" height="1.1" fill="#505050"/><rect x="561.3" y="640.7" width="1.1" height="1.1" fill="#505050"/><rect x="561.3" y="612.1" width="1.1" height="1.1" fill="#505050"/><rect x="561.3" y="583.5" width="1.1" height="1.1" fill="#505050"/><rect x="561.3" y="554.9" width="1.1" height="1.1" fill="#505050"/><rect x="561.3" y="526.3" width="1.1" height="1.1" fill="#505050"/><rect x="561.3" y="497.8" width="1.1" height="1.1" fill="#505050"/><rect x="561.3" y="469.2" width="1.1" height="1.1" fill="#505050"/><rect x="561.3" y="440.6" width="1.1" height="1.1" fill="#505050"/><rect x="561.3" y="412.0" width="1.1" height="1.1" fill="#505050"/><rect x="561.3" y="383.4" width="1.1" height="1.1" fill="#505050"/><rect x="561.3" y="354.8" width="1.1" height="1.1" fill="#505050"/><rect x="561.3" y="326.2" width="1.1" height="1.1" fill="#505050"/><rect x="561.3" y="297.7" width="1.1" height="1.1" fill="#505050"/><rect x="561.3" y="269.1" width="1.1" height="1.1" fill="#505050"/><rect x="561.3" y="240.5" width="1.1" height="1.1" fill="#505050"/><rect x="561.3" y="211.9" width="1.1" height="1.1" fill="#505050"/><rect x="561.3" y="183.3" width="1.1" height="1.1" fill="#505050"/><rect x="589.9" y="726.4" width="1.1" height="1.1" fill="#505050"/><rect x="589.9" y="697.9" width="1.1" height="1.1" fill="#505050"/><rect x="589.9" y="669.3" width="1.1" height="1.1" fill="#505050"/><rect x="589.9" y="640.7" width="1.1" height="1.1" fill="#505050"/><rect x="589.9" y="612.1" width="1.1" height="1.1" fill="#505050"/><rect x="589.9" y="583.5" width="1.1" height="1.1" fill="#505050"/><rect x="589.9" y="554.9" width="1.1" height="1.1" fill="#505050"/><rect x="589.9" y="526.3" width="1.1" height="1.1" fill="#505050"/><rect x="589.9" y="497.8" width="1.1" height="1.1" fill="#505050"/><rect x="589.9" y="469.2" width="1.1" height="1.1" fill="#505050"/><rect x="589.9" y="440.6" width="1.1" height="1.1" fill="#505050"/><rect x="589.9" y="412.0" width="1.1" height="1.1" fill="#505050"/><rect x="589.9" y="383.4" width="1.1" height="1.1" fill="#505050"/><rect x="589.9" y="354.8" width="1.1" height="1.1" fill="#505050"/><rect x="589.9" y="326.2" width="1.1" height="1.1" fill="#505050"/><rect x="589.9" y="297.7" width="1.1" height="1.1" fill="#505050"/><rect x="589.9" y="269.1" width="1.1" height="1.1" fill="#505050"/><rect x="589.9" y="240.5" width="1.1" height="1.1" fill="#505050"/><rect x="589.9" y="211.9" width="1.1" height="1.1" fill="#505050"/><rect x="589.9" y="183.3" width="1.1" height="1.1" fill="#505050"/><rect x="618.4" y="726.4" width="1.1" height="1.1" fill="#505050"/><rect x="618.4" y="697.9" width="1.1" height="1.1" fill="#505050"/><rect x="618.4" y="669.3" width="1.1" height="1.1" fill="#505050"/><rect x="618.4" y="640.7" width="1.1" height="1.1" fill="#505050"/><rect x="618.4" y="612.1" width="1.1" height="1.1" fill="#505050"/><rect x="618.4" y="583.5" width="1.1" height="1.1" fill="#505050"/><rect x="618.4" y="554.9" width="1.1" height="1.1" fill="#505050"/><rect x="618.4" y="526.3" width="1.1" height="1.1" fill="#505050"/><rect x="618.4" y="497.8" width="1.1" height="1.1" fill="#505050"/><rect x="618.4" y="469.2" width="1.1" height="1.1" fill="#505050"/><rect x="618.4" y="440.6" width="1.1" height="1.1" fill="#505050"/><rect x="618.4" y="412.0" width="1.1" height="1.1" fill="#505050"/><rect x="618.4" y="383.4" width="1.1" height="1.1" fill="#505050"/><rect x="618.4" y="354.8" width="1.1" height="1.1" fill="#505050"/><rect x="618.4" y="326.2" width="1.1" height="1.1" fill="#505050"/><rect x="618.4" y="297.7" width="1.1" height="1.1" fill="#505050"/><rect x="618.4" y="269.1" width="1.1" height="1.1" fill="#505050"/><rect x="618.4" y="240.5" width="1.1" height="1.1" fill="#505050"/><rect x="618.4" y="211.9" width="1.1" height="1.1" fill="#505050"/><rect x="618.4" y="183.3" width="1.1" height="1.1" fill="#505050"/><rect x="647.0" y="726.4" width="1.1" height="1.1" fill="#505050"/><rect x="647.0" y="697.9" width="1.1" height="1.1" fill="#505050"/><rect x="647.0" y="669.3" width="1.1" height="1.1" fill="#505050"/><rect x="647.0" y="640.7" width="1.1" height="1.1" fill="#505050"/><rect x="647.0" y="612.1" width="1.1" height="1.1" fill="#505050"/><rect x="647.0" y="583.5" width="1.1" height="1.1" fill="#505050"/><rect x="647.0" y="554.9" width="1.1" height="1.1" fill="#505050"/><rect x="647.0" y="526.3" width="1.1" height="1.1" fill="#505050"/><rect x="647.0" y="497.8" width="1.1" height="1.1" fill="#505050"/><rect x="647.0" y="469.2" width="1.1" height="1.1" fill="#505050"/><rect x="647.0" y="440.6" width="1.1" height="1.1" fill="#505050"/><rect x="647.0" y="412.0" width="1.1" height="1.1" fill="#505050"/><rect x="647.0" y="383.4" width="1.1" height="1.1" fill="#505050"/><rect x="647.0" y="354.8" width="1.1" height="1.1" fill="#505050"/><rect x="647.0" y="326.2" width="1.1" height="1.1" fill="#505050"/><rect x="647.0" y="297.7" width="1.1" height="1.1" fill="#505050"/><rect x="647.0" y="269.1" width="1.1" height="1.1" fill="#505050"/><rect x="647.0" y="240.5" width="1.1" height="1.1" fill="#505050"/><rect x="647.0" y="211.9" width="1.1" height="1.1" fill="#505050"/><rect x="647.0" y="183.3" width="1.1" height="1.1" fill="#505050"/><rect x="675.6" y="726.4" width="1.1" height="1.1" fill="#505050"/><rect x="675.6" y="697.9" width="1.1" height="1.1" fill="#505050"/><rect x="675.6" y="669.3" width="1.1" height="1.1" fill="#505050"/><rect x="675.6" y="640.7" width="1.1" height="1.1" fill="#505050"/><rect x="675.6" y="612.1" width="1.1" height="1.1" fill="#505050"/><rect x="675.6" y="583.5" width="1.1" height="1.1" fill="#505050"/><rect x="675.6" y="554.9" width="1.1" height="1.1" fill="#505050"/><rect x="675.6" y="526.3" width="1.1" height="1.1" fill="#505050"/><rect x="675.6" y="497.8" width="1.1" height="1.1" fill="#505050"/><rect x="675.6" y="469.2" width="1.1" height="1.1" fill="#505050"/><rect x="675.6" y="440.6" width="1.1" height="1.1" fill="#505050"/><rect x="675.6" y="412.0" width="1.1" height="1.1" fill="#505050"/><rect x="675.6" y="383.4" width="1.1" height="1.1" fill="#505050"/><rect x="675.6" y="354.8" width="1.1" height="1.1" fill="#505050"/><rect x="675.6" y="326.2" width="1.1" height="1.1" fill="#505050"/><rect x="675.6" y="297.7" width="1.1" height="1.1" fill="#505050"/><rect x="675.6" y="269.1" width="1.1" height="1.1" fill="#505050"/><rect x="675.6" y="240.5" width="1.1" height="1.1" fill="#505050"/><rect x="675.6" y="211.9" width="1.1" height="1.1" fill="#505050"/><rect x="675.6" y="183.3" width="1.1" height="1.1" fill="#505050"/><rect x="704.2" y="726.4" width="1.1" height="1.1" fill="#505050"/><rect x="704.2" y="697.9" width="1.1" height="1.1" fill="#505050"/><rect x="704.2" y="669.3" width="1.1" height="1.1" fill="#505050"/><rect x="704.2" y="640.7" width="1.1" height="1.1" fill="#505050"/><rect x="704.2" y="612.1" width="1.1" height="1.1" fill="#505050"/><rect x="704.2" y="583.5" width="1.1" height="1.1" fill="#505050"/><rect x="704.2" y="554.9" width="1.1" height="1.1" fill="#505050"/><rect x="704.2" y="526.3" width="1.1" height="1.1" fill="#505050"/><rect x="704.2" y="497.8" width="1.1" height="1.1" fill="#505050"/><rect x="704.2" y="469.2" width="1.1" height="1.1" fill="#505050"/><rect x="704.2" y="440.6" width="1.1" height="1.1" fill="#505050"/><rect x="704.2" y="412.0" width="1.1" height="1.1" fill="#505050"/><rect x="704.2" y="383.4" width="1.1" height="1.1" fill="#505050"/><rect x="704.2" y="354.8" width="1.1" height="1.1" fill="#505050"/><rect x="704.2" y="326.2" width="1.1" height="1.1" fill="#505050"/><rect x="704.2" y="297.7" width="1.1" height="1.1" fill="#505050"/><rect x="704.2" y="269.1" width="1.1" height="1.1" fill="#505050"/><rect x="704.2" y="240.5" width="1.1" height="1.1" fill="#505050"/><rect x="704.2" y="211.9" width="1.1" height="1.1" fill="#505050"/><rect x="704.2" y="183.3" width="1.1" height="1.1" fill="#505050"/><rect x="732.8" y="726.4" width="1.1" height="1.1" fill="#505050"/><rect x="732.8" y="697.9" width="1.1" height="1.1" fill="#505050"/><rect x="732.8" y="669.3" width="1.1" height="1.1" fill="#505050"/><rect x="732.8" y="640.7" width="1.1" height="1.1" fill="#505050"/><rect x="732.8" y="612.1" width="1.1" height="1.1" fill="#505050"/><rect x="732.8" y="583.5" width="1.1" height="1.1" fill="#505050"/><rect x="732.8" y="554.9" width="1.1" height="1.1" fill="#505050"/><rect x="732.8" y="526.3" width="1.1" height="1.1" fill="#505050"/><rect x="732.8" y="497.8" width="1.1" height="1.1" fill="#505050"/><rect x="732.8" y="469.2" width="1.1" height="1.1" fill="#505050"/><rect x="732.8" y="440.6" width="1.1" height="1.1" fill="#505050"/><rect x="732.8" y="412.0" width="1.1" height="1.1" fill="#505050"/><rect x="732.8" y="383.4" width="1.1" height="1.1" fill="#505050"/><rect x="732.8" y="354.8" width="1.1" height="1.1" fill="#505050"/><rect x="732.8" y="326.2" width="1.1" height="1.1" fill="#505050"/><rect x="732.8" y="297.7" width="1.1" height="1.1" fill="#505050"/><rect x="732.8" y="269.1" width="1.1" height="1.1" fill="#505050"/><rect x="732.8" y="240.5" width="1.1" height="1.1" fill="#505050"/><rect x="732.8" y="211.9" width="1.1" height="1.1" fill="#505050"/><rect x="732.8" y="183.3" width="1.1" height="1.1" fill="#505050"/><rect x="761.4" y="726.4" width="1.1" height="1.1" fill="#505050"/><rect x="761.4" y="697.9" width="1.1" height="1.1" fill="#505050"/><rect x="761.4" y="669.3" width="1.1" height="1.1" fill="#505050"/><rect x="761.4" y="640.7" width="1.1" height="1.1" fill="#505050"/><rect x="761.4" y="612.1" width="1.1" height="1.1" fill="#505050"/><rect x="761.4" y="583.5" width="1.1" height="1.1" fill="#505050"/><rect x="761.4" y="554.9" width="1.1" height="1.1" fill="#505050"/><rect x="761.4" y="526.3" width="1.1" height="1.1" fill="#505050"/><rect x="761.4" y="497.8" width="1.1" height="1.1" fill="#505050"/><rect x="761.4" y="469.2" width="1.1" height="1.1" fill="#505050"/><rect x="761.4" y="440.6" width="1.1" height="1.1" fill="#505050"/><rect x="761.4" y="412.0" width="1.1" height="1.1" fill="#505050"/><rect x="761.4" y="383.4" width="1.1" height="1.1" fill="#505050"/><rect x="761.4" y="354.8" width="1.1" height="1.1" fill="#505050"/><rect x="761.4" y="326.2" width="1.1" height="1.1" fill="#505050"/><rect x="761.4" y="297.7" width="1.1" height="1.1" fill="#505050"/><rect x="761.4" y="269.1" width="1.1" height="1.1" fill="#505050"/><rect x="761.4" y="240.5" width="1.1" height="1.1" fill="#505050"/><rect x="761.4" y="211.9" width="1.1" height="1.1" fill="#505050"/><rect x="761.4" y="183.3" width="1.1" height="1.1" fill="#505050"/><rect x="790.0" y="726.4" width="1.1" height="1.1" fill="#505050"/><rect x="790.0" y="697.9" width="1.1" height="1.1" fill="#505050"/><rect x="790.0" y="669.3" width="1.1" height="1.1" fill="#505050"/><rect x="790.0" y="640.7" width="1.1" height="1.1" fill="#505050"/><rect x="790.0" y="612.1" width="1.1" height="1.1" fill="#505050"/><rect x="790.0" y="583.5" width="1.1" height="1.1" fill="#505050"/><rect x="790.0" y="554.9" width="1.1" height="1.1" fill="#505050"/><rect x="790.0" y="526.3" width="1.1" height="1.1" fill="#505050"/><rect x="790.0" y="497.8" width="1.1" height="1.1" fill="#505050"/><rect x="790.0" y="469.2" width="1.1" height="1.1" fill="#505050"/><rect x="790.0" y="440.6" width="1.1" height="1.1" fill="#505050"/><rect x="790.0" y="412.0" width="1.1" height="1.1" fill="#505050"/><rect x="790.0" y="383.4" width="1.1" height="1.1" fill="#505050"/><rect x="790.0" y="354.8" width="1.1" height="1.1" fill="#505050"/><rect x="790.0" y="326.2" width="1.1" height="1.1" fill="#505050"/><rect x="790.0" y="297.7" width="1.1" height="1.1" fill="#505050"/><rect x="790.0" y="269.1" width="1.1" height="1.1" fill="#505050"/><rect x="790.0" y="240.5" width="1.1" height="1.1" fill="#505050"/><rect x="790.0" y="211.9" width="1.1" height="1.1" fill="#505050"/><rect x="790.0" y="183.3" width="1.1" height="1.1" fill="#505050"/><rect x="818.5" y="726.4" width="1.1" height="1.1" fill="#505050"/><rect x="818.5" y="697.9" width="1.1" height="1.1" fill="#505050"/><rect x="818.5" y="669.3" width="1.1" height="1.1" fill="#505050"/><rect x="818.5" y="640.7" width="1.1" height="1.1" fill="#505050"/><rect x="818.5" y="612.1" width="1.1" height="1.1" fill="#505050"/><rect x="818.5" y="583.5" width="1.1" height="1.1" fill="#505050"/><rect x="818.5" y="554.9" width="1.1" height="1.1" fill="#505050"/><rect x="818.5" y="526.3" width="1.1" height="1.1" fill="#505050"/><rect x="818.5" y="497.8" width="1.1" height="1.1" fill="#505050"/><rect x="818.5" y="469.2" width="1.1" height="1.1" fill="#505050"/><rect x="818.5" y="440.6" width="1.1" height="1.1" fill="#505050"/><rect x="818.5" y="412.0" width="1.1" height="1.1" fill="#505050"/><rect x="818.5" y="383.4" width="1.1" height="1.1" fill="#505050"/><rect x="818.5" y="354.8" width="1.1" height="1.1" fill="#505050"/><rect x="818.5" y="326.2" width="1.1" height="1.1" fill="#505050"/><rect x="818.5" y="297.7" width="1.1" height="1.1" fill="#505050"/><rect x="818.5" y="269.1" width="1.1" height="1.1" fill="#505050"/><rect x="818.5" y="240.5" width="1.1" height="1.1" fill="#505050"/><rect x="818.5" y="211.9" width="1.1" height="1.1" fill="#505050"/><rect x="818.5" y="183.3" width="1.1" height="1.1" fill="#505050"/><rect x="847.1" y="726.4" width="1.1" height="1.1" fill="#505050"/><rect x="847.1" y="697.9" width="1.1" height="1.1" fill="#505050"/><rect x="847.1" y="669.3" width="1.1" height="1.1" fill="#505050"/><rect x="847.1" y="640.7" width="1.1" height="1.1" fill="#505050"/><rect x="847.1" y="612.1" width="1.1" height="1.1" fill="#505050"/><rect x="847.1" y="583.5" width="1.1" height="1.1" fill="#505050"/><rect x="847.1" y="554.9" width="1.1" height="1.1" fill="#505050"/><rect x="847.1" y="526.3" width="1.1" height="1.1" fill="#505050"/><rect x="847.1" y="497.8" width="1.1" height="1.1" fill="#505050"/><rect x="847.1" y="469.2" width="1.1" height="1.1" fill="#505050"/><rect x="847.1" y="440.6" width="1.1" height="1.1" fill="#505050"/><rect x="847.1" y="412.0" width="1.1" height="1.1" fill="#505050"/><rect x="847.1" y="383.4" width="1.1" height="1.1" fill="#505050"/><rect x="847.1" y="354.8" width="1.1" height="1.1" fill="#505050"/><rect x="847.1" y="326.2" width="1.1" height="1.1" fill="#505050"/><rect x="847.1" y="297.7" width="1.1" height="1.1" fill="#505050"/><rect x="847.1" y="269.1" width="1.1" height="1.1" fill="#505050"/><rect x="847.1" y="240.5" width="1.1" height="1.1" fill="#505050"/><rect x="847.1" y="211.9" width="1.1" height="1.1" fill="#505050"/><rect x="847.1" y="183.3" width="1.1" height="1.1" fill="#505050"/><rect x="875.7" y="726.4" width="1.1" height="1.1" fill="#505050"/><rect x="875.7" y="697.9" width="1.1" height="1.1" fill="#505050"/><rect x="875.7" y="669.3" width="1.1" height="1.1" fill="#505050"/><rect x="875.7" y="640.7" width="1.1" height="1.1" fill="#505050"/><rect x="875.7" y="612.1" width="1.1" height="1.1" fill="#505050"/><rect x="875.7" y="583.5" width="1.1" height="1.1" fill="#505050"/><rect x="875.7" y="554.9" width="1.1" height="1.1" fill="#505050"/><rect x="875.7" y="526.3" width="1.1" height="1.1" fill="#505050"/><rect x="875.7" y="497.8" width="1.1" height="1.1" fill="#505050"/><rect x="875.7" y="469.2" width="1.1" height="1.1" fill="#505050"/><rect x="875.7" y="440.6" width="1.1" height="1.1" fill="#505050"/><rect x="875.7" y="412.0" width="1.1" height="1.1" fill="#505050"/><rect x="875.7" y="383.4" width="1.1" height="1.1" fill="#505050"/><rect x="875.7" y="354.8" width="1.1" height="1.1" fill="#505050"/><rect x="875.7" y="326.2" width="1.1" height="1.1" fill="#505050"/><rect x="875.7" y="297.7" width="1.1" height="1.1" fill="#505050"/><rect x="875.7" y="269.1" width="1.1" height="1.1" fill="#505050"/><rect x="875.7" y="240.5" width="1.1" height="1.1" fill="#505050"/><rect x="875.7" y="211.9" width="1.1" height="1.1" fill="#505050"/><rect x="875.7" y="183.3" width="1.1" height="1.1" fill="#505050"/><rect x="904.3" y="726.4" width="1.1" height="1.1" fill="#505050"/><rect x="904.3" y="697.9" width="1.1" height="1.1" fill="#505050"/><rect x="904.3" y="669.3" width="1.1" height="1.1" fill="#505050"/><rect x="904.3" y="640.7" width="1.1" height="1.1" fill="#505050"/><rect x="904.3" y="612.1" width="1.1" height="1.1" fill="#505050"/><rect x="904.3" y="583.5" width="1.1" height="1.1" fill="#505050"/><rect x="904.3" y="554.9" width="1.1" height="1.1" fill="#505050"/><rect x="904.3" y="526.3" width="1.1" height="1.1" fill="#505050"/><rect x="904.3" y="497.8" width="1.1" height="1.1" fill="#505050"/><rect x="904.3" y="469.2" width="1.1" height="1.1" fill="#505050"/><rect x="904.3" y="440.6" width="1.1" height="1.1" fill="#505050"/><rect x="904.3" y="412.0" width="1.1" height="1.1" fill="#505050"/><rect x="904.3" y="383.4" width="1.1" height="1.1" fill="#505050"/><rect x="904.3" y="354.8" width="1.1" height="1.1" fill="#505050"/><rect x="904.3" y="326.2" width="1.1" height="1.1" fill="#505050"/><rect x="904.3" y="297.7" width="1.1" height="1.1" fill="#505050"/><rect x="904.3" y="269.1" width="1.1" height="1.1" fill="#505050"/><rect x="904.3" y="240.5" width="1.1" height="1.1" fill="#505050"/><rect x="904.3" y="211.9" width="1.1" height="1.1" fill="#505050"/><rect x="904.3" y="183.3" width="1.1" height="1.1" fill="#505050"/><rect x="932.9" y="726.4" width="1.1" height="1.1" fill="#505050"/><rect x="932.9" y="697.9" width="1.1" height="1.1" fill="#505050"/><rect x="932.9" y="669.3" width="1.1" height="1.1" fill="#505050"/><rect x="932.9" y="640.7" width="1.1" height="1.1" fill="#505050"/><rect x="932.9" y="612.1" width="1.1" height="1.1" fill="#505050"/><rect x="932.9" y="583.5" width="1.1" height="1.1" fill="#505050"/><rect x="932.9" y="554.9" width="1.1" height="1.1" fill="#505050"/><rect x="932.9" y="526.3" width="1.1" height="1.1" fill="#505050"/><rect x="932.9" y="497.8" width="1.1" height="1.1" fill="#505050"/><rect x="932.9" y="469.2" width="1.1" height="1.1" fill="#505050"/><rect x="932.9" y="440.6" width="1.1" height="1.1" fill="#505050"/><rect x="932.9" y="412.0" width="1.1" height="1.1" fill="#505050"/><rect x="932.9" y="383.4" width="1.1" height="1.1" fill="#505050"/><rect x="932.9" y="354.8" width="1.1" height="1.1" fill="#505050"/><rect x="932.9" y="326.2" width="1.1" height="1.1" fill="#505050"/><rect x="932.9" y="297.7" width="1.1" height="1.1" fill="#505050"/><rect x="932.9" y="269.1" width="1.1" height="1.1" fill="#505050"/><rect x="932.9" y="240.5" width="1.1" height="1.1" fill="#505050"/><rect x="932.9" y="211.9" width="1.1" height="1.1" fill="#505050"/><rect x="932.9" y="183.3" width="1.1" height="1.1" fill="#505050"/><rect x="961.5" y="726.4" width="1.1" height="1.1" fill="#505050"/><rect x="961.5" y="697.9" width="1.1" height="1.1" fill="#505050"/><rect x="961.5" y="669.3" width="1.1" height="1.1" fill="#505050"/><rect x="961.5" y="640.7" width="1.1" height="1.1" fill="#505050"/><rect x="961.5" y="612.1" width="1.1" height="1.1" fill="#505050"/><rect x="961.5" y="583.5" width="1.1" height="1.1" fill="#505050"/><rect x="961.5" y="554.9" width="1.1" height="1.1" fill="#505050"/><rect x="961.5" y="526.3" width="1.1" height="1.1" fill="#505050"/><rect x="961.5" y="497.8" width="1.1" height="1.1" fill="#505050"/><rect x="961.5" y="469.2" width="1.1" height="1.1" fill="#505050"/><rect x="961.5" y="440.6" width="1.1" height="1.1" fill="#505050"/><rect x="961.5" y="412.0" width="1.1" height="1.1" fill="#505050"/><rect x="961.5" y="383.4" width="1.1" height="1.1" fill="#505050"/><rect x="961.5" y="354.8" width="1.1" height="1.1" fill="#505050"/><rect x="961.5" y="326.2" width="1.1" height="1.1" fill="#505050"/><rect x="961.5" y="297.7" width="1.1" height="1.1" fill="#505050"/><rect x="961.5" y="269.1" width="1.1" height="1.1" fill="#505050"/><rect x="961.5" y="240.5" width="1.1" height="1.1" fill="#505050"/><rect x="961.5" y="211.9" width="1.1" height="1.1" fill="#505050"/><rect x="961.5" y="183.3" width="1.1" height="1.1" fill="#505050"/><rect x="990.1" y="726.4" width="1.1" height="1.1" fill="#505050"/><rect x="990.1" y="697.9" width="1.1" height="1.1" fill="#505050"/><rect x="990.1" y="669.3" width="1.1" height="1.1" fill="#505050"/><rect x="990.1" y="640.7" width="1.1" height="1.1" fill="#505050"/><rect x="990.1" y="612.1" width="1.1" height="1.1" fill="#505050"/><rect x="990.1" y="583.5" width="1.1" height="1.1" fill="#505050"/><rect x="990.1" y="554.9" width="1.1" height="1.1" fill="#505050"/><rect x="990.1" y="526.3" width="1.1" height="1.1" fill="#505050"/><rect x="990.1" y="497.8" width="1.1" height="1.1" fill="#505050"/><rect x="990.1" y="469.2" width="1.1" height="1.1" fill="#505050"/><rect x="990.1" y="440.6" width="1.1" height="1.1" fill="#505050"/><rect x="990.1" y="412.0" width="1.1" height="1.1" fill="#505050"/><rect x="990.1" y="383.4" width="1.1" height="1.1" fill="#505050"/><rect x="990.1" y="354.8" width="1.1" height="1.1" fill="#505050"/><rect x="990.1" y="326.2" width="1.1" height="1.1" fill="#505050"/><rect x="990.1" y="297.7" width="1.1" height="1.1" fill="#505050"/><rect x="990.1" y="269.1" width="1.1" height="1.1" fill="#505050"/><rect x="990.1" y="240.5" width="1.1" height="1.1" fill="#505050"/><rect x="990.1" y="211.9" width="1.1" height="1.1" fill="#505050"/><rect x="990.1" y="183.3" width="1.1" height="1.1" fill="#505050"/><rect x="1018.7" y="726.4" width="1.1" height="1.1" fill="#505050"/><rect x="1018.7" y="697.9" width="1.1" height="1.1" fill="#505050"/><rect x="1018.7" y="669.3" width="1.1" height="1.1" fill="#505050"/><rect x="1018.7" y="640.7" width="1.1" height="1.1" fill="#505050"/><rect x="1018.7" y="612.1" width="1.1" height="1.1" fill="#505050"/><rect x="1018.7" y="583.5" width="1.1" height="1.1" fill="#505050"/><rect x="1018.7" y="554.9" width="1.1" height="1.1" fill="#505050"/><rect x="1018.7" y="526.3" width="1.1" height="1.1" fill="#505050"/><rect x="1018.7" y="497.8" width="1.1" height="1.1" fill="#505050"/><rect x="1018.7" y="469.2" width="1.1" height="1.1" fill="#505050"/><rect x="1018.7" y="440.6" width="1.1" height="1.1" fill="#505050"/><rect x="1018.7" y="412.0" width="1.1" height="1.1" fill="#505050"/><rect x="1018.7" y="383.4" width="1.1" height="1.1" fill="#505050"/><rect x="1018.7" y="354.8" width="1.1" height="1.1" fill="#505050"/><rect x="1018.7" y="326.2" width="1.1" height="1.1" fill="#505050"/><rect x="1018.7" y="297.7" width="1.1" height="1.1" fill="#505050"/><rect x="1018.7" y="269.1" width="1.1" height="1.1" fill="#505050"/><rect x="1018.7" y="240.5" width="1.1" height="1.1" fill="#505050"/><rect x="1018.7" y="211.9" width="1.1" height="1.1" fill="#505050"/><rect x="1018.7" y="183.3" width="1.1" height="1.1" fill="#505050"/><rect x="1047.2" y="726.4" width="1.1" height="1.1" fill="#505050"/><rect x="1047.2" y="697.9" width="1.1" height="1.1" fill="#505050"/><rect x="1047.2" y="669.3" width="1.1" height="1.1" fill="#505050"/><rect x="1047.2" y="640.7" width="1.1" height="1.1" fill="#505050"/><rect x="1047.2" y="612.1" width="1.1" height="1.1" fill="#505050"/><rect x="1047.2" y="583.5" width="1.1" height="1.1" fill="#505050"/><rect x="1047.2" y="554.9" width="1.1" height="1.1" fill="#505050"/><rect x="1047.2" y="526.3" width="1.1" height="1.1" fill="#505050"/><rect x="1047.2" y="497.8" width="1.1" height="1.1" fill="#505050"/><rect x="1047.2" y="469.2" width="1.1" height="1.1" fill="#505050"/><rect x="1047.2" y="440.6" width="1.1" height="1.1" fill="#505050"/><rect x="1047.2" y="412.0" width="1.1" height="1.1" fill="#505050"/><rect x="1047.2" y="383.4" width="1.1" height="1.1" fill="#505050"/><rect x="1047.2" y="354.8" width="1.1" height="1.1" fill="#505050"/><rect x="1047.2" y="326.2" width="1.1" height="1.1" fill="#505050"/><rect x="1047.2" y="297.7" width="1.1" height="1.1" fill="#505050"/><rect x="1047.2" y="269.1" width="1.1" height="1.1" fill="#505050"/><rect x="1047.2" y="240.5" width="1.1" height="1.1" fill="#505050"/><rect x="1047.2" y="211.9" width="1.1" height="1.1" fill="#505050"/><rect x="1047.2" y="183.3" width="1.1" height="1.1" fill="#505050"/><rect x="1075.8" y="726.4" width="1.1" height="1.1" fill="#505050"/><rect x="1075.8" y="697.9" width="1.1" height="1.1" fill="#505050"/><rect x="1075.8" y="669.3" width="1.1" height="1.1" fill="#505050"/><rect x="1075.8" y="640.7" width="1.1" height="1.1" fill="#505050"/><rect x="1075.8" y="612.1" width="1.1" height="1.1" fill="#505050"/><rect x="1075.8" y="583.5" width="1.1" height="1.1" fill="#505050"/><rect x="1075.8" y="554.9" width="1.1" height="1.1" fill="#505050"/><rect x="1075.8" y="526.3" width="1.1" height="1.1" fill="#505050"/><rect x="1075.8" y="497.8" width="1.1" height="1.1" fill="#505050"/><rect x="1075.8" y="469.2" width="1.1" height="1.1" fill="#505050"/><rect x="1075.8" y="440.6" width="1.1" height="1.1" fill="#505050"/><rect x="1075.8" y="412.0" width="1.1" height="1.1" fill="#505050"/><rect x="1075.8" y="383.4" width="1.1" height="1.1" fill="#505050"/><rect x="1075.8" y="354.8" width="1.1" height="1.1" fill="#505050"/><rect x="1075.8" y="326.2" width="1.1" height="1.1" fill="#505050"/><rect x="1075.8" y="297.7" width="1.1" height="1.1" fill="#505050"/><rect x="1075.8" y="269.1" width="1.1" height="1.1" fill="#505050"/><rect x="1075.8" y="240.5" width="1.1" height="1.1" fill="#505050"/><rect x="1075.8" y="211.9" width="1.1" height="1.1" fill="#505050"/><rect x="1075.8" y="183.3" width="1.1" height="1.1" fill="#505050"/><rect x="1104.4" y="726.4" width="1.1" height="1.1" fill="#505050"/><rect x="1104.4" y="697.9" width="1.1" height="1.1" fill="#505050"/><rect x="1104.4" y="669.3" width="1.1" height="1.1" fill="#505050"/><rect x="1104.4" y="640.7" width="1.1" height="1.1" fill="#505050"/><rect x="1104.4" y="612.1" width="1.1" height="1.1" fill="#505050"/><rect x="1104.4" y="583.5" width="1.1" height="1.1" fill="#505050"/><rect x="1104.4" y="554.9" width="1.1" height="1.1" fill="#505050"/><rect x="1104.4" y="526.3" width="1.1" height="1.1" fill="#505050"/><rect x="1104.4" y="497.8" width="1.1" height="1.1" fill="#505050"/><rect x="1104.4" y="469.2" width="1.1" height="1.1" fill="#505050"/><rect x="1104.4" y="440.6" width="1.1" height="1.1" fill="#505050"/><rect x="1104.4" y="412.0" width="1.1" height="1.1" fill="#505050"/><rect x="1104.4" y="383.4" width="1.1" height="1.1" fill="#505050"/><rect x="1104.4" y="354.8" width="1.1" height="1.1" fill="#505050"/><rect x="1104.4" y="326.2" width="1.1" height="1.1" fill="#505050"/><rect x="1104.4" y="297.7" width="1.1" height="1.1" fill="#505050"/><rect x="1104.4" y="269.1" width="1.1" height="1.1" fill="#505050"/><rect x="1104.4" y="240.5" width="1.1" height="1.1" fill="#505050"/><rect x="1104.4" y="211.9" width="1.1" height="1.1" fill="#505050"/><rect x="1104.4" y="183.3" width="1.1" height="1.1" fill="#505050"/><rect x="1133.0" y="726.4" width="1.1" height="1.1" fill="#505050"/><rect x="1133.0" y="697.9" width="1.1" height="1.1" fill="#505050"/><rect x="1133.0" y="669.3" width="1.1" height="1.1" fill="#505050"/><rect x="1133.0" y="640.7" width="1.1" height="1.1" fill="#505050"/><rect x="1133.0" y="612.1" width="1.1" height="1.1" fill="#505050"/><rect x="1133.0" y="583.5" width="1.1" height="1.1" fill="#505050"/><rect x="1133.0" y="554.9" width="1.1" height="1.1" fill="#505050"/><rect x="1133.0" y="526.3" width="1.1" height="1.1" fill="#505050"/><rect x="1133.0" y="497.8" width="1.1" height="1.1" fill="#505050"/><rect x="1133.0" y="469.2" width="1.1" height="1.1" fill="#505050"/><rect x="1133.0" y="440.6" width="1.1" height="1.1" fill="#505050"/><rect x="1133.0" y="412.0" width="1.1" height="1.1" fill="#505050"/><rect x="1133.0" y="383.4" width="1.1" height="1.1" fill="#505050"/><rect x="1133.0" y="354.8" width="1.1" height="1.1" fill="#505050"/><rect x="1133.0" y="326.2" width="1.1" height="1.1" fill="#505050"/><rect x="1133.0" y="297.7" width="1.1" height="1.1" fill="#505050"/><rect x="1133.0" y="269.1" width="1.1" height="1.1" fill="#505050"/><rect x="1133.0" y="240.5" width="1.1" height="1.1" fill="#505050"/><rect x="1133.0" y="211.9" width="1.1" height="1.1" fill="#505050"/><rect x="1133.0" y="183.3" width="1.1" height="1.1" fill="#505050"/></svg>
<svg class="a" style="left:95px;top:170px" width="1044" height="562" viewBox="95 170 1044 562"><g><path d="M360.7 269.8 L358.3 286.1" fill="none" stroke="#d4d4d4" stroke-width="1" stroke-linejoin="round"/><path d="M332.5 290.4 L342.6 291.5 L349.7 291.7 L351.1 285.6 L358.3 286.1 L369.3 287.5 L369.8 288.6" fill="none" stroke="#d4d4d4" stroke-width="1" stroke-linejoin="round"/><path d="M332.5 297.5 L338.3 298.6 L337.6 308.2 L332.5 307.5" fill="none" stroke="#d4d4d4" stroke-width="1" stroke-linejoin="round"/><path d="M345.8 309.3 L346.9 299.5 L433.8 308.5 L438.1 311.2 L440.7 316.5" fill="none" stroke="#d4d4d4" stroke-width="1" stroke-linejoin="round"/><path d="M332.5 307.5 L388.5 314.4 L421.0 316.5 L412.5 340.0 L409.3 354.9 L393.3 398.1" fill="none" stroke="#d4d4d4" stroke-width="1" stroke-linejoin="round"/><path d="M409.3 354.9 L416.7 360.8" fill="none" stroke="#d4d4d4" stroke-width="1" stroke-linejoin="round"/><path d="M398.6 346.2 L410.3 350.7" fill="none" stroke="#d4d4d4" stroke-width="1" stroke-linejoin="round"/><path d="M398.6 346.2 L383.7 385.3 L395.4 389.6" fill="none" stroke="#d4d4d4" stroke-width="1" stroke-linejoin="round"/><path d="M384.2 354.4 L407.1 357.1" fill="none" stroke="#d4d4d4" stroke-width="1" stroke-linejoin="round"/><path d="M390.1 368.8 L402.3 372.5" fill="none" stroke="#d4d4d4" stroke-width="1" stroke-linejoin="round"/><path d="M384.2 354.4 L380.5 385.3 L332.5 379.5" fill="none" stroke="#d4d4d4" stroke-width="1" stroke-linejoin="round"/><path d="M349.0 407.2 L391.7 411.5" fill="none" stroke="#d4d4d4" stroke-width="1" stroke-linejoin="round"/><path d="M349.0 407.2 L346.9 430.0 L345.8 439.1 L377.3 442.3 L378.3 430.0 L379.4 416.3 L349.0 413.6" fill="none" stroke="#d4d4d4" stroke-width="1" stroke-linejoin="round"/><path d="M354.3 440.7 L353.3 447.1 L368.2 448.7 L368.7 441.7" fill="none" stroke="#d4d4d4" stroke-width="1" stroke-linejoin="round"/><path d="M377.3 442.3 L376.2 451.3 L397.0 453.5" fill="none" stroke="#d4d4d4" stroke-width="1" stroke-linejoin="round"/><path d="M435.9 345.9 L450.0 340.0 L457.8 336.3 L462.6 336.6 L462.1 345.0" fill="none" stroke="#d4d4d4" stroke-width="1" stroke-linejoin="round"/><path d="M442.3 379.5 L444.5 364.5 L446.6 364.0 L447.1 353.9 L447.7 353.3 L485.5 358.1 L482.3 383.7" fill="none" stroke="#d4d4d4" stroke-width="1" stroke-linejoin="round"/><path d="M442.3 379.5 L450.0 380.5" fill="none" stroke="#d4d4d4" stroke-width="1" stroke-linejoin="round"/><path d="M433.8 377.3 L430.6 417.9 L450.0 421.1" fill="none" stroke="#d4d4d4" stroke-width="1" stroke-linejoin="round"/><path d="M433.8 377.3 L442.3 379.0" fill="none" stroke="#d4d4d4" stroke-width="1" stroke-linejoin="round"/><path d="M424.7 392.3 L431.1 393.3" fill="none" stroke="#d4d4d4" stroke-width="1" stroke-linejoin="round"/><path d="M424.7 392.3 L422.1 416.3 L430.6 417.9" fill="none" stroke="#d4d4d4" stroke-width="1" stroke-linejoin="round"/><path d="M411.4 423.2 L450.0 428.0 L566.6 446.5" fill="none" stroke="#d4d4d4" stroke-width="1" stroke-linejoin="round"/><path d="M445.0 420.0 L453.0 419.5 L471.1 421.6 L470.1 430.0" fill="none" stroke="#d4d4d4" stroke-width="1" stroke-linejoin="round"/><path d="M445.0 418.9 L471.7 421.1 L475.4 394.4 L476.5 384.3" fill="none" stroke="#d4d4d4" stroke-width="1" stroke-linejoin="round"/><path d="M445.0 379.5 L566.6 394.4" fill="none" stroke="#d4d4d4" stroke-width="1" stroke-linejoin="round"/><path d="M475.9 388.5 L491.4 390.7 L490.3 398.7 L484.5 398.1 L480.7 430.0" fill="none" stroke="#d4d4d4" stroke-width="1" stroke-linejoin="round"/><path d="M475.4 394.4 L480.2 394.9 L475.9 430.0" fill="none" stroke="#d4d4d4" stroke-width="1" stroke-linejoin="round"/><path d="M502.6 386.4 L499.4 413.6 L501.0 414.7 L499.9 425.3 L541.0 430.0" fill="none" stroke="#d4d4d4" stroke-width="1" stroke-linejoin="round"/><path d="M500.5 401.3 L495.1 400.3 L491.4 424.3 L500.5 425.3" fill="none" stroke="#d4d4d4" stroke-width="1" stroke-linejoin="round"/><path d="M545.8 392.3 L545.3 397.6 L560.7 398.7 L560.2 407.2 L554.3 406.7 L551.7 430.0" fill="none" stroke="#d4d4d4" stroke-width="1" stroke-linejoin="round"/><path d="M545.3 401.9 L550.6 402.9 L547.4 430.0" fill="none" stroke="#d4d4d4" stroke-width="1" stroke-linejoin="round"/><path d="M545.3 397.6 L541.5 430.0" fill="none" stroke="#d4d4d4" stroke-width="1" stroke-linejoin="round"/><path d="M566.6 408.3 L563.9 409.3 L561.3 430.0" fill="none" stroke="#d4d4d4" stroke-width="1" stroke-linejoin="round"/><path d="M517.5 361.3 L554.9 365.6 L551.1 392.3" fill="none" stroke="#d4d4d4" stroke-width="1" stroke-linejoin="round"/><path d="M517.5 361.3 L515.9 372.0 L513.8 372.5 L512.2 386.9" fill="none" stroke="#d4d4d4" stroke-width="1" stroke-linejoin="round"/><path d="M471.7 333.9 L473.3 316.7" fill="none" stroke="#d4d4d4" stroke-width="1" stroke-linejoin="round"/><path d="M504.7 306.7 L503.1 319.0" fill="none" stroke="#d4d4d4" stroke-width="1" stroke-linejoin="round"/><path d="M504.7 306.7 L566.6 313.1" fill="none" stroke="#d4d4d4" stroke-width="1" stroke-linejoin="round"/><path d="M509.5 280.6 L566.6 286.5" fill="none" stroke="#d4d4d4" stroke-width="1" stroke-linejoin="round"/><path d="M509.5 280.6 L507.4 301.4 L566.6 308.9" fill="none" stroke="#d4d4d4" stroke-width="1" stroke-linejoin="round"/><path d="M510.6 269.9 L510.1 273.7 L566.6 280.6" fill="none" stroke="#d4d4d4" stroke-width="1" stroke-linejoin="round"/><path d="M496.7 269.9 L503.1 270.5" fill="none" stroke="#d4d4d4" stroke-width="1" stroke-linejoin="round"/><path d="M485.0 279.5 L497.3 280.6 L491.9 307.3 L481.3 306.2" fill="none" stroke="#d4d4d4" stroke-width="1" stroke-linejoin="round"/><path d="M484.5 288.3 L495.1 289.3" fill="none" stroke="#d4d4d4" stroke-width="1" stroke-linejoin="round"/><path d="M346.3 430.0 L345.8 439.1" fill="none" stroke="#d4d4d4" stroke-width="1" stroke-linejoin="round"/><path d="M377.3 442.3 L378.3 430.0" fill="none" stroke="#d4d4d4" stroke-width="1" stroke-linejoin="round"/><path d="M405.0 462.0 L421.0 463.1 L421.5 466.3 L450.0 467.9 L474.9 469.5 L486.6 469.5 L488.7 483.9" fill="none" stroke="#d4d4d4" stroke-width="1" stroke-linejoin="round"/><path d="M405.0 462.0 L403.9 491.9 L440.7 493.5 L441.8 467.9" fill="none" stroke="#d4d4d4" stroke-width="1" stroke-linejoin="round"/><path d="M403.9 494.0 L405.0 499.3 L425.3 507.9 L434.9 511.6 L442.3 504.7 L450.0 502.5 L455.7 499.3 L471.7 494.0 L566.6 472.1" fill="none" stroke="#d4d4d4" stroke-width="1" stroke-linejoin="round"/><path d="M425.3 503.6 L441.3 503.6 L442.5 506.5 L438.5 510.5 L428.5 510.5 L424.5 507.0" fill="none" stroke="#d4d4d4" stroke-width="1" stroke-linejoin="round"/><path d="M389.0 508.9 L400.0 512.5 L417.8 520.0 L427.4 526.4 L437.0 536.0 L450.0 555.2" fill="none" stroke="#d4d4d4" stroke-width="1" stroke-linejoin="round"/><path d="M543.1 491.9 L549.0 508.4 L560.7 509.5 L561.3 504.7 L552.7 503.6 L552.2 508.4" fill="none" stroke="#d4d4d4" stroke-width="1" stroke-linejoin="round"/><path d="M523.9 505.2 L549.0 508.4" fill="none" stroke="#d4d4d4" stroke-width="1" stroke-linejoin="round"/><path d="M523.9 505.2 L522.3 520.0 L521.8 520.0 L521.3 531.2 L557.5 535.5 L559.1 523.2 L566.6 524.3" fill="none" stroke="#d4d4d4" stroke-width="1" stroke-linejoin="round"/><path d="M559.5 527.5 L566.6 528.0" fill="none" stroke="#d4d4d4" stroke-width="1" stroke-linejoin="round"/><path d="M520.7 535.5 L535.7 537.1 L534.6 546.7 L519.1 544.5 L520.7 535.5" fill="none" stroke="#d4d4d4" stroke-width="1" stroke-linejoin="round"/><path d="M445.0 568.5 L453.5 562.1" fill="none" stroke="#d4d4d4" stroke-width="1" stroke-linejoin="round"/><path d="M447.1 610.0 L450.3 592.5 L458.9 582.4 L468.5 581.9" fill="none" stroke="#d4d4d4" stroke-width="1" stroke-linejoin="round"/><path d="M491.9 590.4 L493.0 582.9 L498.3 578.1 L566.6 582.4" fill="none" stroke="#d4d4d4" stroke-width="1" stroke-linejoin="round"/><path d="M450.0 565.9 L447.7 568.5 L411.4 571.7 L394.0 590.0 L380.7 603.3 L378.0 618.7" fill="none" stroke="#d4d4d4" stroke-width="1" stroke-linejoin="round"/><path d="M411.4 571.7 L408.2 592.5 L406.7 618.7" fill="none" stroke="#d4d4d4" stroke-width="1" stroke-linejoin="round"/><path d="M411.4 589.3 L444.5 595.7 L439.3 618.7" fill="none" stroke="#d4d4d4" stroke-width="1" stroke-linejoin="round"/><path d="M408.2 592.5 L439.7 598.4 L436.0 616.0 L446.7 618.7" fill="none" stroke="#d4d4d4" stroke-width="1" stroke-linejoin="round"/><path d="M452.7 590.0 L450.0 595.3 L446.0 618.7" fill="none" stroke="#d4d4d4" stroke-width="1" stroke-linejoin="round"/><path d="M450.0 594.7 L446.0 618.7" fill="none" stroke="#d4d4d4" stroke-width="1" stroke-linejoin="round"/><path d="M408.0 612.7 L425.3 615.3 L425.3 618.7" fill="none" stroke="#d4d4d4" stroke-width="1" stroke-linejoin="round"/><path d="M572.0 607.3 L571.3 616.0 L574.7 618.0 L582.7 618.0 L584.7 614.7 L584.7 607.3" fill="none" stroke="#d4d4d4" stroke-width="1" stroke-linejoin="round"/><path d="M588.7 607.3 L587.3 617.3 L608.7 618.7" fill="none" stroke="#d4d4d4" stroke-width="1" stroke-linejoin="round"/><path d="M668.0 607.3 L666.7 618.7" fill="none" stroke="#d4d4d4" stroke-width="1" stroke-linejoin="round"/><path d="M673.3 607.3 L672.7 618.7" fill="none" stroke="#d4d4d4" stroke-width="1" stroke-linejoin="round"/><path d="M696.0 607.3 L697.3 612.7 L700.7 615.3 L705.3 615.3 L708.7 612.0 L708.7 607.3" fill="none" stroke="#d4d4d4" stroke-width="1" stroke-linejoin="round"/><path d="M731.3 607.3 L724.0 618.7" fill="none" stroke="#d4d4d4" stroke-width="1" stroke-linejoin="round"/><path d="M732.0 610.0 L727.3 618.7" fill="none" stroke="#d4d4d4" stroke-width="1" stroke-linejoin="round"/><path d="M760.7 607.3 L759.3 618.7" fill="none" stroke="#d4d4d4" stroke-width="1" stroke-linejoin="round"/><path d="M778.7 607.3 L776.7 618.7" fill="none" stroke="#d4d4d4" stroke-width="1" stroke-linejoin="round"/><path d="M884.0 618.0 L886.0 617.0 L898.7 618.4" fill="none" stroke="#d4d4d4" stroke-width="1" stroke-linejoin="round"/><path d="M430.6 336.6 L437.0 345.3 L445.0 342.1" fill="none" stroke="#d4d4d4" stroke-width="1" stroke-linejoin="round"/><path d="M467.7 337.3 L467.7 333.8 L534.4 341.5 L566.6 345.7" fill="none" stroke="#d4d4d4" stroke-width="1" stroke-linejoin="round"/><path d="M534.4 341.5 L535.5 327.7 L566.6 330.4" fill="none" stroke="#d4d4d4" stroke-width="1" stroke-linejoin="round"/><path d="M467.7 337.3 L557.8 347.2 L557.4 354.1 L566.6 355.7" fill="none" stroke="#d4d4d4" stroke-width="1" stroke-linejoin="round"/><path d="M467.7 337.3 L465.7 355.3" fill="none" stroke="#d4d4d4" stroke-width="1" stroke-linejoin="round"/><path d="M455.0 335.0 L462.7 336.5 L460.4 354.9" fill="none" stroke="#d4d4d4" stroke-width="1" stroke-linejoin="round"/><line x1="461.50" y1="341.7" x2="466.80" y2="340.5" stroke="#cfcfcf" stroke-width="0.8"/><line x1="461.25" y1="344.7" x2="466.55" y2="343.5" stroke="#cfcfcf" stroke-width="0.8"/><line x1="461.00" y1="347.7" x2="466.30" y2="346.5" stroke="#cfcfcf" stroke-width="0.8"/><line x1="460.75" y1="350.7" x2="466.05" y2="349.5" stroke="#cfcfcf" stroke-width="0.8"/><line x1="460.50" y1="353.7" x2="465.80" y2="352.5" stroke="#cfcfcf" stroke-width="0.8"/><path d="M371.9 270.1 L369.6 294.1 L445.0 301.6" fill="none" stroke="#14c8d8" stroke-width="1.1" stroke-linejoin="round"/><path d="M467.4 269.4 L445.0 310.1 L422.1 350.0 L417.8 357.1 L412.5 369.9 L407.7 384.8 L404.5 399.2 L402.3 412.5 L400.2 430.0 L398.6 446.0 L395.9 465.2 L394.3 487.6 L391.1 495.1 L385.8 497.2" fill="none" stroke="#14c8d8" stroke-width="1.1" stroke-linejoin="round"/><path d="M566.6 326.5 L480.2 316.7 L457.8 315.8 L453.5 317.9 L445.0 330.7 L434.9 350.0 L430.6 357.1 L422.1 373.1 L416.7 390.1 L413.5 407.2 L410.3 430.0 L406.1 462.0 L403.9 491.9 L406.1 496.1 L409.3 498.3" fill="none" stroke="#14c8d8" stroke-width="1.1" stroke-linejoin="round"/><path d="M485.0 269.4 L479.7 316.3" fill="none" stroke="#14c8d8" stroke-width="1.1" stroke-linejoin="round"/><path d="M333.0 390.1 L392.7 398.1 L404.5 399.2" fill="none" stroke="#14c8d8" stroke-width="1.1" stroke-linejoin="round"/><path d="M392.7 398.1 L392.7 411.5 L402.3 412.5" fill="none" stroke="#14c8d8" stroke-width="1.1" stroke-linejoin="round"/><path d="M410.3 431.1 L450.0 434.8 L566.6 448.7" fill="none" stroke="#14c8d8" stroke-width="1.1" stroke-linejoin="round"/><path d="M332.5 488.7 L385.8 496.7 L421.0 498.3 L440.2 497.7 L450.0 494.0 L465.3 489.7 L566.6 466.3" fill="none" stroke="#14c8d8" stroke-width="1.1" stroke-linejoin="round"/><path d="M332.5 499.9 L382.6 508.9" fill="none" stroke="#14c8d8" stroke-width="1.1" stroke-linejoin="round"/><path d="M394.3 511.1 L414.6 520.0 L438.1 541.3 L450.0 556.3" fill="none" stroke="#14c8d8" stroke-width="1.1" stroke-linejoin="round"/><path d="M400.7 513.2 L401.8 618.7" fill="none" stroke="#14c8d8" stroke-width="1.1" stroke-linejoin="round"/><path d="M419.9 498.3 L440.2 520.0 L456.7 537.1" fill="none" stroke="#14c8d8" stroke-width="1.1" stroke-linejoin="round"/><path d="M457.8 520.0 L454.6 528.5 L455.7 536.0 L462.1 546.7 L475.9 568.0 L505.8 610.0 L512.0 618.7" fill="none" stroke="#14c8d8" stroke-width="1.1" stroke-linejoin="round"/><path d="M445.0 548.8 L456.7 563.7 L488.7 610.0 L494.7 618.7" fill="none" stroke="#14c8d8" stroke-width="1.1" stroke-linejoin="round"/><path d="M475.9 568.5 L566.6 573.9" fill="none" stroke="#14c8d8" stroke-width="1.1" stroke-linejoin="round"/><path d="M566.6 486.5 L477.0 507.3 L466.3 512.1 L457.8 520.0" fill="none" stroke="#14c8d8" stroke-width="1.1" stroke-linejoin="round"/><path d="M691.3 607.3 L690.4 618.7" fill="none" stroke="#14c8d8" stroke-width="1.1" stroke-linejoin="round"/><path d="M784.4 607.3 L782.7 618.7" fill="none" stroke="#14c8d8" stroke-width="1.1" stroke-linejoin="round"/><path d="M870.7 607.3 L868.7 618.7" fill="none" stroke="#14c8d8" stroke-width="1.1" stroke-linejoin="round"/></g><text x="456.5" y="320.3" font-family="Liberation Sans" font-size="9.5" fill="#c02828" textLength="37.5" lengthAdjust="spacingAndGlyphs">5256328L</text><text x="349" y="465.2" font-family="Liberation Sans" font-size="9.5" fill="#c02828" textLength="19.7" lengthAdjust="spacingAndGlyphs">2546</text><text x="448.7" y="459.3" font-family="Liberation Sans" font-size="9.5" fill="#c02828" textLength="17.6" lengthAdjust="spacingAndGlyphs">1509</text><text x="390" y="409.3" font-family="Liberation Sans" font-size="9.5" fill="#c02828" textLength="17.7" lengthAdjust="spacingAndGlyphs">1830</text><text x="385.8" y="517.2" font-family="Liberation Sans" font-size="9.5" fill="#c02828" textLength="37.3" lengthAdjust="spacingAndGlyphs">52562236</text><text x="488.7" y="545.1" font-family="Liberation Sans" font-size="9.5" fill="#c02828" textLength="17.6" lengthAdjust="spacingAndGlyphs">1783</text><text x="465.3" y="618.2" font-family="Liberation Sans" font-size="9.5" fill="#c02828" textLength="16.7" lengthAdjust="spacingAndGlyphs">1803</text><text x="550.1" y="609.1" font-family="Liberation Sans" font-size="9.5" fill="#c02828" textLength="13.3" lengthAdjust="spacingAndGlyphs">505</text><text x="0" y="0" transform="translate(422 363.5) rotate(-57)" font-family="Liberation Sans" font-size="9.5" fill="#c02828" textLength="54" lengthAdjust="spacingAndGlyphs">Exercitation</text><text x="0" y="0" transform="translate(407.5 454.5) rotate(-90)" font-family="Liberation Sans" font-size="9.5" fill="#c02828" textLength="24" lengthAdjust="spacingAndGlyphs">90E47</text><text x="0" y="0" transform="translate(475.5 578.5) rotate(53)" font-family="Liberation Sans" font-size="9.5" fill="#c02828" textLength="69" lengthAdjust="spacingAndGlyphs">Minimum veniam</text><rect x="453.0" y="319.0" width="6" height="6" fill="#0000d0" stroke="#6a6aa0" stroke-width="0.6"/><rect x="430.6" y="336.6" width="6" height="6" fill="#0000d0" stroke="#6a6aa0" stroke-width="0.6"/><rect x="395.9" y="402.9" width="6" height="6" fill="#0000d0" stroke="#6a6aa0" stroke-width="0.6"/><rect x="355.9" y="458.8" width="6" height="6" fill="#0000d0" stroke="#6a6aa0" stroke-width="0.6"/><rect x="401.3" y="439.1" width="6" height="6" fill="#0000d0" stroke="#6a6aa0" stroke-width="0.6"/><rect x="382.6" y="507.3" width="6" height="6" fill="#0000d0" stroke="#6a6aa0" stroke-width="0.6"/><rect x="454.1" y="452.4" width="6" height="6" fill="#0000d0" stroke="#6a6aa0" stroke-width="0.6"/><rect x="494.1" y="538.1" width="6" height="6" fill="#0000d0" stroke="#6a6aa0" stroke-width="0.6"/><rect x="489.8" y="600.5" width="6" height="6" fill="#0000d0" stroke="#6a6aa0" stroke-width="0.6"/><rect x="470.7" y="611.3" width="6" height="6" fill="#0000d0" stroke="#6a6aa0" stroke-width="0.6"/><rect x="554.0" y="602.7" width="6" height="6" fill="#0000d0" stroke="#6a6aa0" stroke-width="0.6"/><circle cx="453" cy="313.7" r="1.4" fill="none" stroke="#ccc" stroke-width="0.7"/><circle cx="389.5" cy="507.3" r="1.4" fill="none" stroke="#ccc" stroke-width="0.7"/></svg>
<div class="a" style="left:566px;top:235px;width:368px;height:373px;background:#ececec;border:3px solid #a9a9a9;border-radius:3px;box-shadow:0 0 0 0.5px #777"></div>
<div class="t" style="left:588.4px;top:261.80px;font-size:13px;color:#1e1e1e;letter-spacing:0.12px;">Übergeordneter Layer:</div>
<div class="combo" style="left:732.4px;top:257.4px;width:178.89999999999998px;height:21.200000000000045px"></div>
<div class="cbtn" style="left:892.8px;top:259.9px;width:16px;height:16.200000000000045px"></div>
<svg class="a" style="left:896.8px;top:262.0px" width="8" height="12" viewBox="0 0 8 12"><path d="M1.3 4.6 L4 2 L6.7 4.6 M1.3 7.4 L4 10 L6.7 7.4" stroke="#fff" stroke-width="1.3" fill="none" stroke-linecap="round" stroke-linejoin="round"/></svg>
<div class="t" style="left:588.4px;top:293.60px;font-size:13px;color:#1e1e1e;letter-spacing:0.12px;">Layername:</div>
<div class="a" style="left:733px;top:290px;width:178px;height:19.5px;background:#fff;border-bottom:1px solid #bdbdbd;box-shadow:0 0 0 0.5px #d8d8d8"></div>
<div class="t" style="left:734px;top:293.60px;font-size:13px;color:#1e1e1e;letter-spacing:0.12px;">Text</div>
<div class="a" style="left:588px;top:324px;width:324px;height:167px;background:#e4e4e4;border-top:1px solid #dcdcdc"></div>
<div class="t" style="left:595.6px;top:315.24px;font-size:12px;color:#1e1e1e;letter-spacing:0.12px;color:#222">Attribute</div>
<div class="t" style="right:824.3px;top:349.20px;font-size:13px;color:#1e1e1e;letter-spacing:0.12px">Farbe:</div>
<div class="combo" style="left:685.3px;top:344.5px;width:211.20000000000005px;height:21.100000000000023px"></div>
<div class="cbtn" style="left:878.0px;top:347.0px;width:16px;height:16.100000000000023px"></div>
<svg class="a" style="left:882.0px;top:349.05px" width="8" height="12" viewBox="0 0 8 12"><path d="M1.3 4.6 L4 2 L6.7 4.6 M1.3 7.4 L4 10 L6.7 7.4" stroke="#fff" stroke-width="1.3" fill="none" stroke-linecap="round" stroke-linejoin="round"/></svg>
<div class="a" style="left:689px;top:351px;width:16px;height:9px;background:#000"></div>
<div class="t" style="left:711px;top:349.20px;font-size:13px;color:#1e1e1e;letter-spacing:0.12px;">Schwarz</div>
<div class="t" style="right:824.3px;top:381.00px;font-size:13px;color:#1e1e1e;letter-spacing:0.12px">Linienbreite:</div>
<div class="combo" style="left:685.3px;top:376.3px;width:211.20000000000005px;height:21.19999999999999px"></div>
<div class="cbtn" style="left:878.0px;top:378.8px;width:16px;height:16.19999999999999px"></div>
<svg class="a" style="left:882.0px;top:380.9px" width="8" height="12" viewBox="0 0 8 12"><path d="M1.3 4.6 L4 2 L6.7 4.6 M1.3 7.4 L4 10 L6.7 7.4" stroke="#fff" stroke-width="1.3" fill="none" stroke-linecap="round" stroke-linejoin="round"/></svg>
<div class="a" style="left:689px;top:386.5px;width:16px;height:1px;background:#333"></div>
<div class="t" style="left:711px;top:381.00px;font-size:13px;color:#1e1e1e;letter-spacing:0.12px;">0.25mm (ISO)</div>
<div class="t" style="right:824.3px;top:412.70px;font-size:13px;color:#1e1e1e;letter-spacing:0.12px">Linientyp:</div>
<div class="combo" style="left:685.3px;top:408px;width:211.20000000000005px;height:21.30000000000001px"></div>
<div class="cbtn" style="left:878.0px;top:410.5px;width:16px;height:16.30000000000001px"></div>
<svg class="a" style="left:882.0px;top:412.65px" width="8" height="12" viewBox="0 0 8 12"><path d="M1.3 4.6 L4 2 L6.7 4.6 M1.3 7.4 L4 10 L6.7 7.4" stroke="#fff" stroke-width="1.3" fill="none" stroke-linecap="round" stroke-linejoin="round"/></svg>
<div class="t" style="left:689px;top:412.50px;font-size:13px;color:#1e1e1e;letter-spacing:0.12px;">Durchgehend</div>
<div class="chk" style="left:603px;top:440px"></div>
<svg class="a" style="left:603px;top:440px" width="14" height="14" viewBox="0 0 14 14"><path d="M3.4 7.4 L6 10.2 L10.8 3.6" stroke="#fff" stroke-width="1.9" fill="none" stroke-linecap="round" stroke-linejoin="round"/></svg>
<div class="t" style="left:621.3px;top:440.80px;font-size:13px;color:#1e1e1e;letter-spacing:0.12px;">Plottbar</div>
<div class="chk" style="left:603px;top:463px"></div>
<svg class="a" style="left:603px;top:463px" width="14" height="14" viewBox="0 0 14 14"><path d="M3.4 7.4 L6 10.2 L10.8 3.6" stroke="#fff" stroke-width="1.9" fill="none" stroke-linecap="round" stroke-linejoin="round"/></svg>
<div class="t" style="left:621.3px;top:463.60px;font-size:13px;color:#1e1e1e;letter-spacing:0.12px;">Fangbar</div>
<div class="chk" style="left:588.4px;top:507.5px"></div>
<svg class="a" style="left:588.4px;top:507.5px" width="14" height="14" viewBox="0 0 14 14"><path d="M3.4 7.4 L6 10.2 L10.8 3.6" stroke="#fff" stroke-width="1.9" fill="none" stroke-linecap="round" stroke-linejoin="round"/></svg>
<div class="t" style="left:606.4px;top:507.80px;font-size:13px;color:#1e1e1e;letter-spacing:0.12px;letter-spacing:0.13px">Selektion auf den neuen Layer verschieben</div>
<div class="a" style="left:733.6px;top:566.8px;width:94.3px;height:20.4px;background:#fff;border-radius:5px;box-shadow:0 0 0 0.5px rgba(0,0,0,.18),0 1px 1px rgba(0,0,0,.12)"></div>
<div class="t" style="left:733.6px;width:94.3px;text-align:center;top:570px;font-size:13px;color:#1e1e1e">Abbrechen</div>
<div class="a" style="left:844px;top:566.8px;width:67.2px;height:20.4px;background:linear-gradient(#2b8cff,#0a74f5);border-radius:5px;box-shadow:0 1px 1px rgba(0,0,0,.12)"></div>
<div class="t" style="left:844px;width:67.2px;text-align:center;top:570px;font-size:13px;color:#fff">OK</div>
<svg class="a" style="left:0px;top:0px;overflow:visible" width="1" height="1" viewBox="0 0 1 1"><circle cx="753" cy="514" r="35.5" fill="none" stroke="#a9bbcf" stroke-width="7" opacity="0.5"/><circle cx="753" cy="514" r="35.5" fill="none" stroke="#e4eaf1" stroke-width="2.2" opacity="0.6"/><circle cx="753" cy="514" r="38.5" fill="none" stroke="#9fb2c8" stroke-width="1" opacity="0.8"/></svg>
<svg class="a" style="left:0px;top:0px;overflow:visible" width="1" height="1" viewBox="0 0 1 1"><path d="M753.3 513.9 L753.3 536 L758.3 531.4 L762 540.3 L765.6 538.8 L762 530.4 L768.8 530.4 Z" fill="#fff" stroke="#000" stroke-width="1.2" stroke-linejoin="round"/></svg>
<div class="a" style="left:1153px;top:121px;width:302px;height:677px;background:#ececec;border-top:2px solid #c4c4c4"></div>
<svg class="a" style="left:1153px;top:122px" width="302" height="676" viewBox="1153 122 302 676"><circle cx="1164" cy="133" r="7" fill="#6e6e6e"/><path d="M1161 130 L1167 136 M1167 130 L1161 136" stroke="#fff" stroke-width="1.8" stroke-linecap="round"/><circle cx="1182" cy="133" r="7" fill="#6e6e6e"/><rect x="1178" y="132" width="5.5" height="4.5" fill="none" stroke="#fff" stroke-width="1.1"/><path d="M1180 132 V129.5 H1186 V134.5 H1183.5" fill="none" stroke="#fff" stroke-width="1.1"/><circle cx="1164" cy="569.5" r="7" fill="#6e6e6e"/><path d="M1161 566.5 L1167 572.5 M1167 566.5 L1161 572.5" stroke="#fff" stroke-width="1.8" stroke-linecap="round"/><circle cx="1182" cy="569.5" r="7" fill="#6e6e6e"/><rect x="1178" y="568.5" width="5.5" height="4.5" fill="none" stroke="#fff" stroke-width="1.1"/><path d="M1180 568.5 V566.0 H1186 V571.0 H1183.5" fill="none" stroke="#fff" stroke-width="1.1"/></svg>
<div class="t" style="left:1296px;top:127.5px;font-size:12px;color:#2a2a2a;letter-spacing:0.2px">Layerliste</div>
<div class="a" style="left:1155px;top:143.5px;width:300px;height:1px;background:#d2d2d2"></div>
<div class="a" style="left:1155.5px;top:145.5px;width:59.5px;height:25.5px;background:linear-gradient(#e9e9e9,#f3f3f3 60%,#f6f6f6);border:1.5px solid #b9b9b9"></div>
<div class="a" style="left:1215.4px;top:145.5px;width:59.5px;height:25.5px;background:linear-gradient(#e9e9e9,#f3f3f3 60%,#f6f6f6);border:1.5px solid #b9b9b9"></div>
<div class="a" style="left:1275.3px;top:145.5px;width:59px;height:25.5px;background:#b4b4b4;border-radius:4px"></div>
<div class="a" style="left:1335.2px;top:145.5px;width:59.5px;height:25.5px;background:linear-gradient(#e9e9e9,#f3f3f3 60%,#f6f6f6);border:1.5px solid #b9b9b9"></div>
<div class="a" style="left:1395.1px;top:145.5px;width:59.5px;height:25.5px;background:linear-gradient(#e9e9e9,#f3f3f3 60%,#f6f6f6);border:1.5px solid #b9b9b9"></div>
<div class="a" style="left:1155px;top:171.5px;width:300px;height:387.5px;background:#fff;border:1.5px solid #c8c8c8;border-right:none"></div>
<div class="a" style="left:1181px;top:179px;width:16px;height:9.5px;border:1.3px solid #000;background:#fff"></div>
<div class="t" style="left:1203px;top:177px;font-size:13px;color:#000">0</div>
<svg class="a" style="left:0px;top:0px;overflow:visible" width="1" height="1" viewBox="0 0 1 1"><g transform="translate(1185 157.8) scale(1.0)"><path d="M-7.5 0.3 C-5 -6.3 5 -6.3 7.5 0.3 C5 6.5 -5 6.5 -7.5 0.3Z" fill="#000"/><path d="M-4.8 0.8 C-3 -2.6 3 -2.6 4.8 0.8 C3 3.8 -3 3.8 -4.8 0.8Z" fill="#fff"/><path d="M-2.8 -2.2 C-1.5 -3.2 1.5 -3.2 2.8 -2.2 L2.5 1.2 C1.5 2.6 -1.5 2.6 -2.5 1.2Z" fill="#000"/><circle cx="-0.5" cy="-1" r="0.8" fill="#fff"/></g></svg>
<svg class="a" style="left:0px;top:0px;overflow:visible" width="1" height="1" viewBox="0 0 1 1"><g transform="translate(1245 157.8) scale(1.0)"><path d="M-7.5 0.3 C-5 -6.3 5 -6.3 7.5 0.3 C5 6.5 -5 6.5 -7.5 0.3Z" fill="#a8a8a8"/><path d="M-4.8 0.8 C-3 -2.6 3 -2.6 4.8 0.8 C3 3.8 -3 3.8 -4.8 0.8Z" fill="#fff"/><path d="M-2.8 -2.2 C-1.5 -3.2 1.5 -3.2 2.8 -2.2 L2.5 1.2 C1.5 2.6 -1.5 2.6 -2.5 1.2Z" fill="#a8a8a8"/><circle cx="-0.5" cy="-1" r="0.8" fill="#fff"/></g></svg>
<svg class="a" style="left:0px;top:0px;overflow:visible" width="1" height="1" viewBox="0 0 1 1"><path d="M1303.3 152.0 H1306.7 V156.3 H1311.0 V159.7 H1306.7 V164.0 H1303.3 V159.7 H1299.0 V156.3 H1303.3Z" fill="#f00" stroke="#5a0000" stroke-width="0.7"/></svg>
<svg class="a" style="left:0px;top:0px;overflow:visible" width="1" height="1" viewBox="0 0 1 1"><rect x="1359" y="155.6" width="12" height="4.6" fill="#f00" stroke="#5a0000" stroke-width="0.7"/></svg>
<svg class="a" style="left:0px;top:0px;overflow:visible" width="1" height="1" viewBox="0 0 1 1"><g transform="translate(1418 165) rotate(-45.6)"><path d="M0 0 L3.5 -1.6 L17.512246250733583 -1.6 L17.512246250733583 1.6 L3.5 1.6Z" fill="#e6a23c" stroke="#8a5a14" stroke-width="0.5"/><path d="M0 0 L3.5 -1.6 L3.5 1.6Z" fill="#f3d9a8"/><path d="M0 0 L1.4 -0.6400000000000001 L1.4 0.6400000000000001Z" fill="#333"/><rect x="17.012246250733583" y="-1.6" width="3" height="3.2" rx="0.8" fill="#e02828"/></g></svg>
<svg class="a" style="left:0px;top:0px;overflow:visible" width="1" height="1" viewBox="0 0 1 1"><g transform="translate(1394.5 189.6) rotate(-44.6)"><path d="M0 0 L3.5 -1.5 L15.743903091169926 -1.5 L15.743903091169926 1.5 L3.5 1.5Z" fill="#e6a23c" stroke="#8a5a14" stroke-width="0.5"/><path d="M0 0 L3.5 -1.5 L3.5 1.5Z" fill="#f3d9a8"/><path d="M0 0 L1.4 -0.6000000000000001 L1.4 0.6000000000000001Z" fill="#333"/><rect x="15.243903091169926" y="-1.5" width="3" height="3" rx="0.8" fill="#e02828"/></g></svg>
<svg class="a" style="left:0px;top:0px;overflow:visible" width="1" height="1" viewBox="0 0 1 1"><g transform="translate(1423 182.6) scale(1.0)"><path d="M-7.5 0.3 C-5 -6.3 5 -6.3 7.5 0.3 C5 6.5 -5 6.5 -7.5 0.3Z" fill="#000"/><path d="M-4.8 0.8 C-3 -2.6 3 -2.6 4.8 0.8 C3 3.8 -3 3.8 -4.8 0.8Z" fill="#fff"/><path d="M-2.8 -2.2 C-1.5 -3.2 1.5 -3.2 2.8 -2.2 L2.5 1.2 C1.5 2.6 -1.5 2.6 -2.5 1.2Z" fill="#000"/><circle cx="-0.5" cy="-1" r="0.8" fill="#fff"/></g></svg>
<svg class="a" style="left:0px;top:0px;overflow:visible" width="1" height="1" viewBox="0 0 1 1"><path d="M1441.5 182.5 V180 A4.2 4.2 0 0 1 1449.9 180 V182.5" fill="none" stroke="#bdbdbd" stroke-width="1.6"/><rect x="1440" y="182.5" width="11.4" height="7.2" rx="0.8" fill="#b9b9b9"/></svg>
<div class="t" style="left:1283px;top:564px;font-size:12px;color:#2a2a2a;letter-spacing:0.2px">Selektionsfilter</div>
<div class="a" style="left:1155px;top:579px;width:300px;height:1.5px;background:#d2d2d2"></div>
<div class="a" style="left:1167px;top:594.5px;width:275.5px;height:129px;background:#e5e5e5;border-top:1px solid #dedede"></div>
<div class="t" style="left:1174px;top:586px;font-size:11.5px;color:#222">Filter</div>
<div class="t" style="left:1181.8px;top:618.4px;font-size:13px;color:#1e1e1e">Objekttyp:</div>
<div class="t" style="left:1181.8px;top:644.2px;font-size:13px;color:#1e1e1e">Eigenschaft:</div>
<div class="t" style="left:1181.8px;top:670.4px;font-size:13px;color:#1e1e1e">Vergleich:</div>
<div class="t" style="left:1181.8px;top:693.4px;font-size:13px;color:#1e1e1e">Wert:</div>
<div class="combo" style="left:1265.4px;top:614.5px;width:162.0999999999999px;height:21.0px"></div>
<div class="cbtn" style="left:1409.0px;top:617.0px;width:16px;height:16.0px"></div>
<svg class="a" style="left:1413.0px;top:619.0px" width="8" height="12" viewBox="0 0 8 12"><path d="M1.3 4.6 L4 2 L6.7 4.6 M1.3 7.4 L4 10 L6.7 7.4" stroke="#fff" stroke-width="1.3" fill="none" stroke-linecap="round" stroke-linejoin="round"/></svg>
<div class="combo" style="left:1265.4px;top:640.6px;width:162.0999999999999px;height:21.0px"></div>
<div class="cbtn" style="left:1409.0px;top:643.1px;width:16px;height:16.0px"></div>
<svg class="a" style="left:1413.0px;top:645.1px" width="8" height="12" viewBox="0 0 8 12"><path d="M1.3 4.6 L4 2 L6.7 4.6 M1.3 7.4 L4 10 L6.7 7.4" stroke="#fff" stroke-width="1.3" fill="none" stroke-linecap="round" stroke-linejoin="round"/></svg>
<div class="combo" style="left:1265.4px;top:666.7px;width:162.0999999999999px;height:21.0px"></div>
<div class="cbtn" style="left:1409.0px;top:669.2px;width:16px;height:16.0px"></div>
<svg class="a" style="left:1413.0px;top:671.2px" width="8" height="12" viewBox="0 0 8 12"><path d="M1.3 4.6 L4 2 L6.7 4.6 M1.3 7.4 L4 10 L6.7 7.4" stroke="#fff" stroke-width="1.3" fill="none" stroke-linecap="round" stroke-linejoin="round"/></svg>
<div class="t" style="left:1269px;top:618.4px;font-size:13px;color:#111">Text</div>
<div class="a" style="left:1167.0px;top:739.2px;width:69.9px;height:25.5px;background:linear-gradient(#f4f4f4,#e8e8e8);border:1px solid #adadad"></div>
<div class="a" style="left:1235.9px;top:739.2px;width:69.9px;height:25.5px;background:linear-gradient(#f4f4f4,#e8e8e8);border:1px solid #adadad"></div>
<div class="a" style="left:1304.8px;top:739.2px;width:69.9px;height:25.5px;background:linear-gradient(#f4f4f4,#e8e8e8);border:1px solid #adadad"></div>
<div class="a" style="left:1373.7px;top:739.2px;width:69.9px;height:25.5px;background:linear-gradient(#f4f4f4,#e8e8e8);border:1px solid #adadad"></div>
<svg class="a" style="left:0px;top:0px;overflow:visible" width="1" height="1" viewBox="0 0 1 1"><defs><clipPath id="c3"><rect x="1332.5" y="745.3" width="10.2" height="10"/></clipPath><clipPath id="c4"><rect x="1401.5" y="745.3" width="10.5" height="10"/></clipPath></defs><rect x="1194.5" y="745" width="12.3" height="12.7" fill="#ff9090" stroke="#333" stroke-width="0.8" stroke-dasharray="1.2 1"/><rect x="1266.5" y="748.7" width="10.5" height="10.3" fill="#ff9090" stroke="#333" stroke-width="0.8" stroke-dasharray="1.2 1"/><rect x="1263.5" y="745.3" width="10" height="10" fill="#ff9090" stroke="#333" stroke-width="0.9"/><rect x="1332.5" y="745.3" width="10.2" height="10" fill="#ff9090" stroke="#333" stroke-width="0.9"/><rect x="1335.5" y="748.7" width="10.5" height="10.3" fill="#fff" stroke="#333" stroke-width="0.8" stroke-dasharray="1.2 1"/><rect x="1401.5" y="745.3" width="10.5" height="10" fill="#fff" stroke="#333" stroke-width="0.9"/><rect x="1404.5" y="748.7" width="10.5" height="10.3" fill="none" stroke="#333" stroke-width="0.8" stroke-dasharray="1.2 1"/><rect x="1404.5" y="748.7" width="7.5" height="6.6" fill="#ff9090"/></svg>
<div class="a" style="left:1455px;top:122px;width:45px;height:676px;background:linear-gradient(90deg,#ececec,#e2e2e2 50%,#c8c8c8)"></div>
<div class="a" style="left:1455px;top:122px;width:1px;height:676px;background:#d8d8d8"></div>
<svg class="a" style="left:0px;top:0px;overflow:visible" width="1" height="1" viewBox="0 0 1 1"><circle cx="1463.5" cy="132" r="0.9" fill="#8a8a8a"/><circle cx="1469.5" cy="132" r="0.9" fill="#8a8a8a"/><circle cx="1475.5" cy="132" r="0.9" fill="#8a8a8a"/><circle cx="1481.5" cy="132" r="0.9" fill="#8a8a8a"/><circle cx="1487.5" cy="132" r="0.9" fill="#8a8a8a"/></svg>
<div class="a" style="left:1456.2px;top:135px;width:42.6px;height:42.1px;background:#b5b5b5;border-radius:6px"></div>
<div class="a" style="left:1456.2px;top:330px;width:42.6px;height:43.0px;background:#b5b5b5;border-radius:6px"></div>
<div class="a" style="left:1456.2px;top:433.5px;width:42.6px;height:41.8px;background:#b5b5b5;border-radius:6px"></div>
<svg class="a" style="left:0px;top:0px;overflow:visible" width="1" height="1" viewBox="0 0 1 1"><rect x="1463.5" y="142.5" width="27" height="27" fill="#fff" stroke="#111" stroke-width="1"/><rect x="1463" y="142" width="28" height="5" fill="#000"/><rect x="1464.5" y="143" width="3" height="3" fill="#fff"/><path d="M1471 157 L1476 154 L1476 163 L1471 166Z" fill="#888" stroke="#333" stroke-width="0.6"/><path d="M1474 156 L1483 151 L1483 161 L1474 166Z" fill="#fff" stroke="#444" stroke-width="0.7"/><path d="M1476 161 L1480 154 L1481 159Z" fill="none" stroke="#f03030" stroke-width="0.8"/></svg>
<svg class="a" style="left:0px;top:0px;overflow:visible" width="1" height="1" viewBox="0 0 1 1"><rect x="1463.5" y="189.5" width="27" height="27" fill="#fff" stroke="#111" stroke-width="1"/><rect x="1463" y="189" width="28" height="5" fill="#000"/><rect x="1464.5" y="190" width="3" height="3" fill="#fff"/><rect x="1469" y="200" width="11" height="8" fill="#f3e6b8" stroke="#333" stroke-width="0.7"/><circle cx="1479" cy="208" r="4.3" fill="#f3e6b8" stroke="#333" stroke-width="0.7"/></svg>
<svg class="a" style="left:0px;top:0px;overflow:visible" width="1" height="1" viewBox="0 0 1 1"><rect x="1463.5" y="235.2" width="27" height="27" fill="#fff" stroke="#111" stroke-width="1"/><rect x="1463" y="234.7" width="28" height="5" fill="#000"/><rect x="1464.5" y="235.7" width="3" height="3" fill="#fff"/><rect x="1469" y="245" width="16" height="11" rx="2" fill="#f6f4f2" stroke="#b8c8e0" stroke-width="0.8"/></svg>
<svg class="a" style="left:0px;top:0px;overflow:visible" width="1" height="1" viewBox="0 0 1 1"><rect x="1458" y="276" width="1" height="1" fill="#777"/><rect x="1462" y="276" width="1" height="1" fill="#777"/><rect x="1466" y="276" width="1" height="1" fill="#777"/><rect x="1470" y="276" width="1" height="1" fill="#777"/><rect x="1474" y="276" width="1" height="1" fill="#777"/><rect x="1478" y="276" width="1" height="1" fill="#777"/><rect x="1482" y="276" width="1" height="1" fill="#777"/><rect x="1486" y="276" width="1" height="1" fill="#777"/><rect x="1490" y="276" width="1" height="1" fill="#777"/><rect x="1494" y="276" width="1" height="1" fill="#777"/><rect x="1498" y="276" width="1" height="1" fill="#777"/></svg>
<svg class="a" style="left:0px;top:0px;overflow:visible" width="1" height="1" viewBox="0 0 1 1"><rect x="1463.5" y="291.1" width="27" height="27" fill="#fff" stroke="#111" stroke-width="1"/><rect x="1463" y="290.6" width="28" height="5" fill="#000"/><rect x="1464.5" y="291.6" width="3" height="3" fill="#fff"/><rect x="1466" y="300.0" width="4" height="3" fill="#000"/><rect x="1473.5" y="299.6" width="12" height="3.6" fill="#fff" stroke="#222" stroke-width="0.7"/><rect x="1466" y="306.2" width="4" height="3" fill="#000"/><rect x="1473.5" y="305.8" width="12" height="3.6" fill="#fff" stroke="#222" stroke-width="0.7"/><rect x="1466" y="312.4" width="4" height="3" fill="#000"/><rect x="1473.5" y="312.0" width="12" height="3.6" fill="#fff" stroke="#222" stroke-width="0.7"/></svg>
<svg class="a" style="left:0px;top:0px;overflow:visible" width="1" height="1" viewBox="0 0 1 1"><rect x="1463.5" y="337.5" width="27" height="27" fill="#fff" stroke="#111" stroke-width="1"/><rect x="1463" y="337" width="28" height="5" fill="#000"/><rect x="1464.5" y="338" width="3" height="3" fill="#fff"/><path d="M1470 348 C1470 345.5 1484 345.5 1484 348 L1478 354 L1478 362 L1476 361 L1476 354Z" fill="#9a9a9a" stroke="#333" stroke-width="0.6"/><ellipse cx="1477" cy="347.7" rx="7" ry="1.6" fill="#555"/></svg>
<svg class="a" style="left:0px;top:0px;overflow:visible" width="1" height="1" viewBox="0 0 1 1"><rect x="1463.5" y="384.3" width="27" height="27" fill="#fff" stroke="#111" stroke-width="1"/><rect x="1463" y="383.8" width="28" height="5" fill="#000"/><rect x="1464.5" y="384.8" width="3" height="3" fill="#fff"/><path d="M1468.5 393 L1468.5 406 L1473 404 L1473 395Z" fill="#ddd" stroke="#333" stroke-width="0.6"/><rect x="1473" y="396.5" width="10" height="7" rx="1.5" fill="#777" stroke="#444" stroke-width="0.5"/><rect x="1473" y="396.5" width="3" height="7" fill="#fff"/><line x1="1467" y1="400" x2="1487" y2="400" stroke="#f08080" stroke-width="0.6" stroke-dasharray="1.5 1"/></svg>
<svg class="a" style="left:0px;top:0px;overflow:visible" width="1" height="1" viewBox="0 0 1 1"><rect x="1458" y="425" width="1" height="1" fill="#777"/><rect x="1462" y="425" width="1" height="1" fill="#777"/><rect x="1466" y="425" width="1" height="1" fill="#777"/><rect x="1470" y="425" width="1" height="1" fill="#777"/><rect x="1474" y="425" width="1" height="1" fill="#777"/><rect x="1478" y="425" width="1" height="1" fill="#777"/><rect x="1482" y="425" width="1" height="1" fill="#777"/><rect x="1486" y="425" width="1" height="1" fill="#777"/><rect x="1490" y="425" width="1" height="1" fill="#777"/><rect x="1494" y="425" width="1" height="1" fill="#777"/><rect x="1498" y="425" width="1" height="1" fill="#777"/></svg>
<svg class="a" style="left:0px;top:0px;overflow:visible" width="1" height="1" viewBox="0 0 1 1"><rect x="1463.5" y="440.5" width="27" height="27" fill="#fff" stroke="#111" stroke-width="1"/><rect x="1463" y="440" width="28" height="5" fill="#000"/><rect x="1464.5" y="441" width="3" height="3" fill="#fff"/><rect x="1465" y="448.0" width="10" height="0.8" fill="#999"/><rect x="1465" y="451.2" width="12" height="0.8" fill="#999"/><rect x="1465" y="454.4" width="10" height="0.8" fill="#999"/><rect x="1465" y="457.6" width="12" height="0.8" fill="#999"/><rect x="1463.5" y="462.5" width="27" height="5" fill="#fff" stroke="#222" stroke-width="0.6"/><rect x="1472" y="464.5" width="14" height="1" fill="#666"/></svg>
<svg class="a" style="left:0px;top:0px;overflow:visible" width="1" height="1" viewBox="0 0 1 1"><rect x="1463.5" y="487.5" width="27" height="27" fill="#fff" stroke="#111" stroke-width="1"/><rect x="1463" y="487" width="28" height="5" fill="#000"/><rect x="1464.5" y="488" width="3" height="3" fill="#fff"/><rect x="1470" y="495" width="14" height="16" rx="1" fill="#c8903a"/><rect x="1472" y="497" width="10" height="12" fill="#f2f2f2"/><rect x="1474" y="493.5" width="6" height="3" rx="1" fill="#888"/><rect x="1473" y="499.0" width="8" height="0.7" fill="#bbb"/><rect x="1473" y="501.2" width="8" height="0.7" fill="#bbb"/><rect x="1473" y="503.4" width="8" height="0.7" fill="#bbb"/><rect x="1473" y="505.6" width="8" height="0.7" fill="#bbb"/></svg>
<svg class="a" style="left:0px;top:0px;overflow:visible" width="1" height="1" viewBox="0 0 1 1"><rect x="1458" y="528" width="1" height="1" fill="#777"/><rect x="1462" y="528" width="1" height="1" fill="#777"/><rect x="1466" y="528" width="1" height="1" fill="#777"/><rect x="1470" y="528" width="1" height="1" fill="#777"/><rect x="1474" y="528" width="1" height="1" fill="#777"/><rect x="1478" y="528" width="1" height="1" fill="#777"/><rect x="1482" y="528" width="1" height="1" fill="#777"/><rect x="1486" y="528" width="1" height="1" fill="#777"/><rect x="1490" y="528" width="1" height="1" fill="#777"/><rect x="1494" y="528" width="1" height="1" fill="#777"/><rect x="1498" y="528" width="1" height="1" fill="#777"/></svg>
<svg class="a" style="left:0px;top:0px;overflow:visible" width="1" height="1" viewBox="0 0 1 1"><path d="M1465.5 550 H1474.5 L1469.5 556.5 C1474 556 1476 558.5 1475.5 561.5 C1475 565 1470 566.5 1465.5 565" fill="none" stroke="#111" stroke-width="1.9" stroke-linejoin="miter"/><path d="M1479.5 549.2 V566.2 H1484 C1492.5 566.2 1492.5 549.2 1484 549.2Z" fill="none" stroke="#111" stroke-width="1.9"/></svg>
<div class="a" style="left:0;top:798px;width:1500px;height:46px;background:#dcdcdc;border-top:1px solid #cacaca"></div>
<div class="st" style="left:2px;top:808px">392.4008,262.9411</div>
<div class="st" style="left:2px;top:828px">@392.4008,262.9411</div>
<div class="a" style="left:253px;top:802px;width:1px;height:40px;background:#8a8a8a"></div>
<div class="st" style="left:256px;top:808px">472.352&lt;34°</div>
<div class="st" style="left:256px;top:828px">@472.352&lt;34°</div>
<div class="st" style="left:949px;top:812px;font-size:9.3px;letter-spacing:0.4px">Selektierte Objekte:</div>
<div class="st" style="left:949px;top:823px;font-size:9.3px;letter-spacing:0.4px">31 Texte auf Layer "0".</div>
<svg class="a" style="left:0px;top:0px;overflow:visible" width="1" height="1" viewBox="0 0 1 1"><circle cx="509.3" cy="822" r="3" fill="#c6c6c6"/><circle cx="943.3" cy="822" r="3" fill="#c6c6c6"/><circle cx="1272.2" cy="822" r="3" fill="#c6c6c6"/><rect x="717.3" y="806.3" width="17.2" height="29" rx="8.6" fill="#fff" stroke="#555" stroke-width="0.8"/><path d="M717.5 819 Q726 816.5 734.3 819" fill="none" stroke="#555" stroke-width="1.1"/><line x1="726" y1="806.5" x2="726" y2="818" stroke="#555" stroke-width="0.8"/><rect x="724.4" y="808.5" width="3.2" height="7" rx="1.6" fill="#fff" stroke="#444" stroke-width="0.8"/></svg>
<svg class="a" style="left:0px;top:0px;overflow:visible" width="1" height="1" viewBox="0 0 1 1"><circle cx="102.1" cy="133.5" r="5.5" fill="#f2f2f2" stroke="#3b5096" stroke-width="1.9" opacity="0.9"/><path d="M99 135 L104 131 M100 132 L101 136" stroke="#c88" stroke-width="0.6"/><line x1="103" y1="134.5" x2="107.3" y2="139" stroke="#f0a020" stroke-width="2"/><circle cx="107.5" cy="139.3" r="1.1" fill="#e06060"/></svg>
</div></body></html>
